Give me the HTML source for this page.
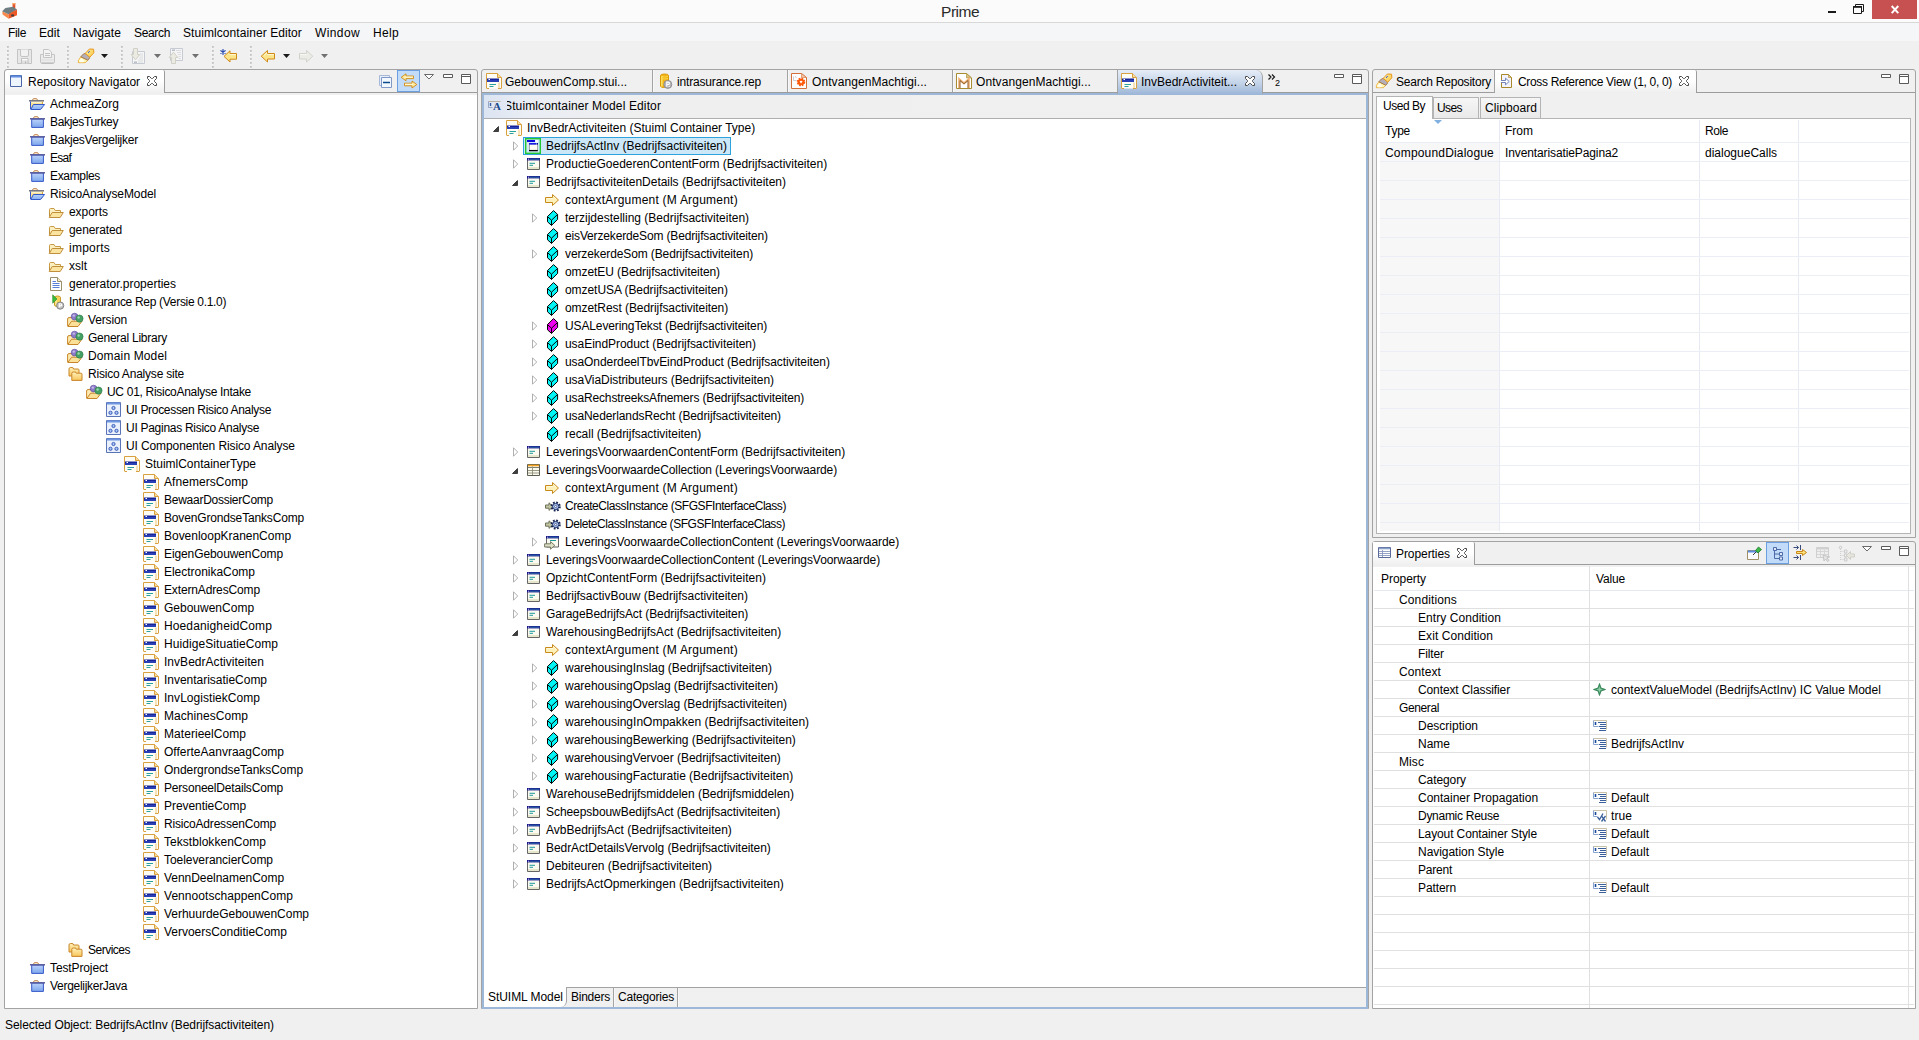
<!DOCTYPE html>
<html lang="en"><head><meta charset="utf-8"><title>Prime</title>
<style>
html,body{margin:0;padding:0}
body{width:1919px;height:1040px;position:relative;overflow:hidden;background:#f0f0f0;
 font-family:"Liberation Sans",sans-serif;font-size:12px;color:#000;line-height:16px}
.b{position:absolute;box-sizing:border-box}
.ic{position:absolute;overflow:visible}
.t{position:absolute;white-space:nowrap;height:16px;line-height:16px;font-size:12px;letter-spacing:-0.1px;color:#000}
.title{position:absolute;white-space:nowrap;font-size:15px;line-height:20px;color:#2b2b2b}
.panel{position:absolute;box-sizing:border-box;border:1px solid #a3a3a3;border-radius:3px 3px 0 0;background:#f0f0f0}
.white{background:#fff}
.tabsel{position:absolute;box-sizing:border-box;background:linear-gradient(#fff 0,#fff 45%,#efefef 100%);border-right:1px solid #9c9c9c;border-radius:0 2px 0 0}
.tabline{position:absolute;height:1px;background:#9c9c9c}
.vsep{position:absolute;width:1px;background:#a3a3a3;box-shadow:1px 0 0 #f8f8f8}
.hl{position:absolute;height:1px}
.vl{position:absolute;width:1px}

</style></head>
<body>

<div class="b" style="left:0px;top:0px;width:1919px;height:22px;background:#fbfbfb"></div>
<div class="b" style="left:0px;top:22px;width:1919px;height:1px;background:#d8d8d8"></div>
<svg class="ic" style="left:0px;top:0px" width="20" height="22" viewBox="0 0 20 22"><rect x="12.6" y="3.4" width="2.7" height="5.4" fill="#e6502a"/><rect x="12.3" y="3" width="3.3" height="1.4" fill="#f8a868"/><path d="M2.2 11.2L9 14.5L8.6 18.8L2.6 14.6Z" fill="#f58a4c"/><path d="M9 14.5L17 9.6V15.2L8.6 18.8Z" fill="#ee5a26"/><path d="M2.2 11.2L5.4 8L13 6.8L17 9.6L9 14.5Z" fill="#6e7d82"/><path d="M9 14.5L10 12.6L11 13.4L12 11.4L13 12.2L14 10.2L15 11L17 9.6V11L9 15.6Z" fill="#ee5a26"/><ellipse cx="12.6" cy="15.4" rx="1.5" ry="1.2" fill="#4a3c3c"/></svg>
<span class="title" style="left:941px;top:2px;font-size:15.5px;letter-spacing:-0.45px">Prime</span>
<div class="b" style="left:1828px;top:11px;width:8px;height:2px;background:#1a1a1a"></div>
<svg class="ic" style="left:1853px;top:4px" width="11" height="10" viewBox="0 0 11 10"><path d="M2.5 2V0.5H10.5V7.5H8.5" fill="none" stroke="#1a1a1a"/><path d="M0.5 2.5H8.5V9.5H0.5Z" fill="none" stroke="#1a1a1a"/><path d="M0 3H9" stroke="#1a1a1a" stroke-width="1.6"/></svg>
<div class="b" style="left:1872px;top:0px;width:45px;height:19px;background:#c75050"></div>
<svg class="ic" style="left:1891px;top:5px" width="8" height="9" viewBox="0 0 8 9"><path d="M0.7 1L7.3 8.2M7.3 1L0.7 8.2" stroke="#fff" stroke-width="1.9"/></svg>
<div class="b" style="left:0px;top:23px;width:1919px;height:18px;background:#f5f6f7"></div>
<span class="t" style="left:8px;top:25px;letter-spacing:-0.34px;">File</span>
<span class="t" style="left:39px;top:25px;letter-spacing:0.08px;">Edit</span>
<span class="t" style="left:73px;top:25px;letter-spacing:0.08px;">Navigate</span>
<span class="t" style="left:134px;top:25px;letter-spacing:-0.34px;">Search</span>
<span class="t" style="left:183px;top:25px;letter-spacing:0.07px;">Stuimlcontainer Editor</span>
<span class="t" style="left:315px;top:25px;letter-spacing:0.39px;">Window</span>
<span class="t" style="left:373px;top:25px;letter-spacing:0.33px;">Help</span>
<div class="b" style="left:0px;top:41px;width:1919px;height:28px;background:#f0f0f0"></div>
<svg class="ic" style="left:6px;top:45px" width="4" height="24" viewBox="0 0 4 24"><rect x="1" y="1" width="1.8" height="1.8" fill="#c2c2c2"/><rect x="0.5" y="3" width="1" height="1" fill="#fafafa"/><rect x="1" y="5" width="1.8" height="1.8" fill="#c2c2c2"/><rect x="0.5" y="7" width="1" height="1" fill="#fafafa"/><rect x="1" y="9" width="1.8" height="1.8" fill="#c2c2c2"/><rect x="0.5" y="11" width="1" height="1" fill="#fafafa"/><rect x="1" y="13" width="1.8" height="1.8" fill="#c2c2c2"/><rect x="0.5" y="15" width="1" height="1" fill="#fafafa"/><rect x="1" y="17" width="1.8" height="1.8" fill="#c2c2c2"/><rect x="0.5" y="19" width="1" height="1" fill="#fafafa"/><rect x="1" y="21" width="1.8" height="1.8" fill="#c2c2c2"/><rect x="0.5" y="23" width="1" height="1" fill="#fafafa"/></svg>
<svg class="ic" style="left:66px;top:45px" width="4" height="24" viewBox="0 0 4 24"><rect x="1" y="1" width="1.8" height="1.8" fill="#c2c2c2"/><rect x="0.5" y="3" width="1" height="1" fill="#fafafa"/><rect x="1" y="5" width="1.8" height="1.8" fill="#c2c2c2"/><rect x="0.5" y="7" width="1" height="1" fill="#fafafa"/><rect x="1" y="9" width="1.8" height="1.8" fill="#c2c2c2"/><rect x="0.5" y="11" width="1" height="1" fill="#fafafa"/><rect x="1" y="13" width="1.8" height="1.8" fill="#c2c2c2"/><rect x="0.5" y="15" width="1" height="1" fill="#fafafa"/><rect x="1" y="17" width="1.8" height="1.8" fill="#c2c2c2"/><rect x="0.5" y="19" width="1" height="1" fill="#fafafa"/><rect x="1" y="21" width="1.8" height="1.8" fill="#c2c2c2"/><rect x="0.5" y="23" width="1" height="1" fill="#fafafa"/></svg>
<svg class="ic" style="left:120px;top:45px" width="4" height="24" viewBox="0 0 4 24"><rect x="1" y="1" width="1.8" height="1.8" fill="#c2c2c2"/><rect x="0.5" y="3" width="1" height="1" fill="#fafafa"/><rect x="1" y="5" width="1.8" height="1.8" fill="#c2c2c2"/><rect x="0.5" y="7" width="1" height="1" fill="#fafafa"/><rect x="1" y="9" width="1.8" height="1.8" fill="#c2c2c2"/><rect x="0.5" y="11" width="1" height="1" fill="#fafafa"/><rect x="1" y="13" width="1.8" height="1.8" fill="#c2c2c2"/><rect x="0.5" y="15" width="1" height="1" fill="#fafafa"/><rect x="1" y="17" width="1.8" height="1.8" fill="#c2c2c2"/><rect x="0.5" y="19" width="1" height="1" fill="#fafafa"/><rect x="1" y="21" width="1.8" height="1.8" fill="#c2c2c2"/><rect x="0.5" y="23" width="1" height="1" fill="#fafafa"/></svg>
<svg class="ic" style="left:211px;top:45px" width="4" height="24" viewBox="0 0 4 24"><rect x="1" y="1" width="1.8" height="1.8" fill="#c2c2c2"/><rect x="0.5" y="3" width="1" height="1" fill="#fafafa"/><rect x="1" y="5" width="1.8" height="1.8" fill="#c2c2c2"/><rect x="0.5" y="7" width="1" height="1" fill="#fafafa"/><rect x="1" y="9" width="1.8" height="1.8" fill="#c2c2c2"/><rect x="0.5" y="11" width="1" height="1" fill="#fafafa"/><rect x="1" y="13" width="1.8" height="1.8" fill="#c2c2c2"/><rect x="0.5" y="15" width="1" height="1" fill="#fafafa"/><rect x="1" y="17" width="1.8" height="1.8" fill="#c2c2c2"/><rect x="0.5" y="19" width="1" height="1" fill="#fafafa"/><rect x="1" y="21" width="1.8" height="1.8" fill="#c2c2c2"/><rect x="0.5" y="23" width="1" height="1" fill="#fafafa"/></svg>
<svg class="ic" style="left:249px;top:45px" width="4" height="24" viewBox="0 0 4 24"><rect x="1" y="1" width="1.8" height="1.8" fill="#c2c2c2"/><rect x="0.5" y="3" width="1" height="1" fill="#fafafa"/><rect x="1" y="5" width="1.8" height="1.8" fill="#c2c2c2"/><rect x="0.5" y="7" width="1" height="1" fill="#fafafa"/><rect x="1" y="9" width="1.8" height="1.8" fill="#c2c2c2"/><rect x="0.5" y="11" width="1" height="1" fill="#fafafa"/><rect x="1" y="13" width="1.8" height="1.8" fill="#c2c2c2"/><rect x="0.5" y="15" width="1" height="1" fill="#fafafa"/><rect x="1" y="17" width="1.8" height="1.8" fill="#c2c2c2"/><rect x="0.5" y="19" width="1" height="1" fill="#fafafa"/><rect x="1" y="21" width="1.8" height="1.8" fill="#c2c2c2"/><rect x="0.5" y="23" width="1" height="1" fill="#fafafa"/></svg>
<svg class="ic" style="left:17px;top:49px" width="15" height="15" viewBox="0 0 15 15"><path d="M0.5 0.5H14.5V14.5H0.5Z" fill="#e8e8e8" stroke="#c4c4c4"/><path d="M3.5 0.5V6Q3.5 7.5 5 7.5H10Q11.5 7.5 11.5 6V0.5" fill="#f2f2f2" stroke="#c4c4c4"/><path d="M4.5 14.5V9.5H11V14.5" fill="#e0e0e0" stroke="#c0c0c0"/><path d="M5 10.6H10.5" stroke="#fbfbfb" stroke-width="1.4"/><path d="M8.5 12.5V14.5" stroke="#b8b8b8" stroke-width="1.2"/></svg>
<svg class="ic" style="left:40px;top:49px" width="15" height="15" viewBox="0 0 15 15"><path d="M0.5 13V5.5H14.5V13Q14.5 14 13.5 14H1.5Q0.5 14 0.5 13Z" fill="#ececec" stroke="#c4c4c4"/><path d="M3.5 8.5V0.5H8.5L11.5 3V8.5Z" fill="#f4f4f4" stroke="#c4c4c4"/><path d="M5 4.5H10M5 6.5H10" stroke="#c2c2c2" stroke-width="1"/><path d="M1 11H14" stroke="#dcdcdc"/><path d="M1.5 14.3H13.5" stroke="#bcbcbc" stroke-width="1.2"/></svg>
<svg class="ic" style="left:78px;top:48px" width="16" height="16" viewBox="0 0 16 16"><path d="M2.8 8.8L0.4 12.4V14.7H7.2L9.8 12.2Z" fill="#fff6b8" stroke="#e8a422" stroke-width=".8" stroke-linejoin="round"/><path d="M1.6 12.6L3.6 10.2L6.4 13.2L5.4 14.2H1.6Z" fill="#fffef0"/><path d="M2.8 8.8L5.4 6L7.2 5.4L11.8 9.2L10.8 11.4L9.8 12.2Z" fill="#b6aeb8" stroke="#9c6c34" stroke-width=".8" stroke-linejoin="round"/><path d="M7.2 5.4L11.4 1L15.6 1.2L15.8 4.8L11.8 9.2Z" fill="#fbd868" stroke="#e8961e" stroke-width="1" stroke-linejoin="round"/><path d="M9 5.6L12.2 2.2" stroke="#fdf0b0" stroke-width="1.4"/><circle cx="11.3" cy="3.3" r=".6" fill="#2448c0"/><circle cx="10.4" cy="4.3" r=".6" fill="#2448c0"/></svg>
<svg class="ic" style="left:101px;top:54px" width="7" height="4" viewBox="0 0 7 4"><path d="M0 0H7L3.5 4Z" fill="#1a1a1a"/></svg>
<svg class="ic" style="left:130px;top:48px" width="16" height="16" viewBox="0 0 16 16"><path d="M2.5 3.5H14.5V15.5H2.5Z" fill="#f5f5f5" stroke="#c6cad2"/><path d="M10 6H13M10 8H13M9 10H13M8 12H13M8 14H13" stroke="#dadce0"/><path d="M4 14.2H7" stroke="#b4b8c4" stroke-width="1.4"/><path d="M3.5 0.5H7.5V6.5H9.8L5.5 11.8L1.2 6.5H3.5Z" fill="#ebebe3" stroke="#d0d0c6" stroke-linejoin="round"/></svg>
<svg class="ic" style="left:154px;top:54px" width="7" height="4" viewBox="0 0 7 4"><path d="M0 0H7L3.5 4Z" fill="#707070"/></svg>
<svg class="ic" style="left:168px;top:48px" width="16" height="16" viewBox="0 0 16 16"><path d="M2.5 0.5H14.5V12.5H2.5Z" fill="#f5f5f5" stroke="#c6cad2"/><path d="M8 2.5H13M9 4.5H13M10 6.5H13M10.5 8.5H13M10.5 10.5H13" stroke="#dadce0"/><path d="M4 2.2H7" stroke="#b4b8c4" stroke-width="1.4"/><path d="M3.5 15.5H7.5V9.5H9.8L5.5 4.2L1.2 9.5H3.5Z" fill="#ebebe3" stroke="#d0d0c6" stroke-linejoin="round"/></svg>
<svg class="ic" style="left:192px;top:54px" width="7" height="4" viewBox="0 0 7 4"><path d="M0 0H7L3.5 4Z" fill="#707070"/></svg>
<svg class="ic" style="left:220px;top:48px" width="17" height="16" viewBox="0 0 17 16"><path d="M16.5 5.5H10V2.8L4 8.4L10 14V11.2H16.5Z" fill="#fde58c" stroke="#d08a18" stroke-linejoin="round"/><path d="M9.5 6.6H16" stroke="#fff8d8"/><path d="M3 1V7M0.4 2.5L5.6 5.5M5.6 2.5L0.4 5.5" stroke="#2448b0" stroke-width="1.1"/></svg>
<svg class="ic" style="left:260px;top:49px" width="16" height="16" viewBox="0 0 16 16"><path d="M14.5 4.5H7.5V1.5L1.2 7.2L7.5 13V10H14.5Z" fill="#fde58c" stroke="#d08a18" stroke-linejoin="round"/><path d="M7 5.6H14M4 6.5L7 3.8" stroke="#fff8d8" stroke-width="1" fill="none"/></svg>
<svg class="ic" style="left:283px;top:54px" width="7" height="4" viewBox="0 0 7 4"><path d="M0 0H7L3.5 4Z" fill="#1a1a1a"/></svg>
<svg class="ic" style="left:299px;top:49px" width="16" height="16" viewBox="0 0 16 16"><path d="M0.5 4.5H7.5V1.5L13.8 7.2L7.5 13V10H0.5Z" fill="#ecece6" stroke="#d2d2cc" stroke-linejoin="round"/><path d="M1 5.6H8" stroke="#f8f8f4" stroke-width="1" fill="none"/></svg>
<svg class="ic" style="left:321px;top:54px" width="7" height="4" viewBox="0 0 7 4"><path d="M0 0H7L3.5 4Z" fill="#707070"/></svg>
<div class="panel" style="left:4px;top:69px;width:474px;height:940px"></div>
<div class="b" style="left:5px;top:95px;width:472px;height:913px;background:#fff"></div>
<div class="tabsel" style="left:5px;top:70px;width:160px;height:23px;border-radius:4px 2px 0 0"></div>
<div class="tabline" style="left:164px;top:92px;width:313px"></div>
<svg class="ic" style="left:10px;top:75px" width="12" height="12" viewBox="0 0 12 12"><path d="M0.5 0.5H11.5V11.5H0.5Z" fill="#eef5fd" stroke="#4a66a8"/><path d="M1 1.5H11" stroke="#5f8de0" stroke-width="2"/></svg>
<span class="t" style="left:28px;top:74px;letter-spacing:-0.00px;">Repository Navigator</span>
<svg class="ic" style="left:147px;top:76px" width="10" height="10" viewBox="0 0 10 10"><path d="M0.5 0.5L2.5 0.5L4.5 2.5L5.5 2.5L7.5 0.5L9.5 0.5L9.5 2.5L7.5 4.5L7.5 5.5L9.5 7.5L9.5 9.5L7.5 9.5L5.5 7.5L4.5 7.5L2.5 9.5L0.5 9.5L0.5 7.5L2.5 5.5L2.5 4.5L0.5 2.5Z" fill="#fff" stroke="#4a4a4a" stroke-width="1"/></svg>
<svg class="ic" style="left:379px;top:75px" width="13" height="13" viewBox="0 0 13 13"><path d="M0.5 0.5H10.5V10.5H0.5Z" fill="#e8eef8" stroke="#a8b8d8"/><path d="M2.5 2.5H12.5V12.5H2.5Z" fill="#f2f8ff" stroke="#7f98c8"/><path d="M4 7.5H11" stroke="#0a4a8a" stroke-width="1.5"/></svg>
<div class="b" style="left:397px;top:70px;width:23px;height:22px;background:#c2dbf8;border:1px solid #6aa0e0"></div>
<svg class="ic" style="left:400px;top:73px" width="17" height="16" viewBox="0 0 17 16"><path d="M13.5 3H6V0.8L1.2 4.3L6 7.8V5.6H13.5Z" fill="#fdeaa0" stroke="#d08a10" stroke-linejoin="round" stroke-width=".9"/><path d="M4.5 10.2H12V8L16.8 11.5L12 15V12.8H4.5Z" fill="#fdeaa0" stroke="#d08a10" stroke-linejoin="round" stroke-width=".9"/><path d="M5 4.1H13M5 11.3H13" stroke="#fffbe8" stroke-width=".9"/></svg>
<svg class="ic" style="left:424px;top:74px" width="10" height="6" viewBox="0 0 10 6"><path d="M0.5 0.5H9.5L5 5Z" fill="#fff" stroke="#5a5a5a" stroke-width=".9"/></svg>
<svg class="ic" style="left:443px;top:74px" width="10" height="4" viewBox="0 0 10 4"><path d="M0.5 0.5H9.5V3.5H0.5Z" fill="#fff" stroke="#5a5a5a"/></svg>
<svg class="ic" style="left:461px;top:74px" width="10" height="10" viewBox="0 0 10 10"><path d="M0.5 0.5H9.5V9.5H0.5Z" fill="#fff" stroke="#5a5a5a"/><path d="M1 2.5H9" stroke="#5a5a5a"/></svg>
<svg class="ic" style="left:29px;top:96px" width="16" height="16" viewBox="0 0 16 16"><defs><linearGradient id="gpo" x1="0" y1="0" x2="0" y2="1"><stop offset="0" stop-color="#b4d0fa"/><stop offset="1" stop-color="#84aef0"/></linearGradient></defs><path d="M3.5 4.5Q3.5 2.5 5 2.5H7Q8.5 2.5 8.5 4.5" fill="#fbe4c0" stroke="#c8966a"/><path d="M1.5 5.5H13.5V12.5H1.5Z" fill="#fde492" stroke="none"/><path d="M2.5 6.5H12.5" stroke="#fef3c8"/><path d="M0 4.8H15" stroke="#666a78" stroke-width="1.4"/><path d="M1.5 5.5V13" stroke="#3558c8" fill="none"/><path d="M13.5 5.5V8" stroke="#d3a64c" fill="none"/><path d="M1.8 13.5L4.4 8.5H15.6L11.6 13.5Z" fill="url(#gpo)" stroke="#3558c8" stroke-linejoin="round"/></svg>
<span class="t" style="left:50px;top:96px;letter-spacing:0.03px;">AchmeaZorg</span>
<svg class="ic" style="left:29px;top:114px" width="16" height="16" viewBox="0 0 16 16"><defs><linearGradient id="gpc" x1="0" y1="0" x2="0" y2="1"><stop offset="0" stop-color="#bcd3fa"/><stop offset="1" stop-color="#7ca6ec"/></linearGradient></defs><path d="M4.5 4.5Q4.5 2.5 6 2.5H8Q9.5 2.5 9.5 4.5" fill="#fbe4c0" stroke="#c8966a"/><path d="M2.7 5H14.4V13.4H2.7Z" fill="url(#gpc)" stroke="#3558c8"/><path d="M1 4.8H16" stroke="#5a5c9c" stroke-width="1.5"/></svg>
<span class="t" style="left:50px;top:114px;letter-spacing:-0.35px;">BakjesTurkey</span>
<svg class="ic" style="left:29px;top:132px" width="16" height="16" viewBox="0 0 16 16"><defs><linearGradient id="gpc" x1="0" y1="0" x2="0" y2="1"><stop offset="0" stop-color="#bcd3fa"/><stop offset="1" stop-color="#7ca6ec"/></linearGradient></defs><path d="M4.5 4.5Q4.5 2.5 6 2.5H8Q9.5 2.5 9.5 4.5" fill="#fbe4c0" stroke="#c8966a"/><path d="M2.7 5H14.4V13.4H2.7Z" fill="url(#gpc)" stroke="#3558c8"/><path d="M1 4.8H16" stroke="#5a5c9c" stroke-width="1.5"/></svg>
<span class="t" style="left:50px;top:132px;letter-spacing:-0.24px;">BakjesVergelijker</span>
<svg class="ic" style="left:29px;top:150px" width="16" height="16" viewBox="0 0 16 16"><defs><linearGradient id="gpc" x1="0" y1="0" x2="0" y2="1"><stop offset="0" stop-color="#bcd3fa"/><stop offset="1" stop-color="#7ca6ec"/></linearGradient></defs><path d="M4.5 4.5Q4.5 2.5 6 2.5H8Q9.5 2.5 9.5 4.5" fill="#fbe4c0" stroke="#c8966a"/><path d="M2.7 5H14.4V13.4H2.7Z" fill="url(#gpc)" stroke="#3558c8"/><path d="M1 4.8H16" stroke="#5a5c9c" stroke-width="1.5"/></svg>
<span class="t" style="left:50px;top:150px;letter-spacing:-0.75px;">Esaf</span>
<svg class="ic" style="left:29px;top:168px" width="16" height="16" viewBox="0 0 16 16"><defs><linearGradient id="gpc" x1="0" y1="0" x2="0" y2="1"><stop offset="0" stop-color="#bcd3fa"/><stop offset="1" stop-color="#7ca6ec"/></linearGradient></defs><path d="M4.5 4.5Q4.5 2.5 6 2.5H8Q9.5 2.5 9.5 4.5" fill="#fbe4c0" stroke="#c8966a"/><path d="M2.7 5H14.4V13.4H2.7Z" fill="url(#gpc)" stroke="#3558c8"/><path d="M1 4.8H16" stroke="#5a5c9c" stroke-width="1.5"/></svg>
<span class="t" style="left:50px;top:168px;letter-spacing:-0.34px;">Examples</span>
<svg class="ic" style="left:29px;top:186px" width="16" height="16" viewBox="0 0 16 16"><defs><linearGradient id="gpo" x1="0" y1="0" x2="0" y2="1"><stop offset="0" stop-color="#b4d0fa"/><stop offset="1" stop-color="#84aef0"/></linearGradient></defs><path d="M3.5 4.5Q3.5 2.5 5 2.5H7Q8.5 2.5 8.5 4.5" fill="#fbe4c0" stroke="#c8966a"/><path d="M1.5 5.5H13.5V12.5H1.5Z" fill="#fde492" stroke="none"/><path d="M2.5 6.5H12.5" stroke="#fef3c8"/><path d="M0 4.8H15" stroke="#666a78" stroke-width="1.4"/><path d="M1.5 5.5V13" stroke="#3558c8" fill="none"/><path d="M13.5 5.5V8" stroke="#d3a64c" fill="none"/><path d="M1.8 13.5L4.4 8.5H15.6L11.6 13.5Z" fill="url(#gpo)" stroke="#3558c8" stroke-linejoin="round"/></svg>
<span class="t" style="left:50px;top:186px;letter-spacing:-0.11px;">RisicoAnalyseModel</span>
<svg class="ic" style="left:48px;top:204px" width="16" height="16" viewBox="0 0 16 16"><path d="M1.5 12.5V5.5Q1.5 4.5 2.5 4.5H6L7.2 6.5H12.5V8" fill="#fdf0c0" stroke="#c89a45"/><path d="M1.2 13.5L4.2 8.5H15.3L12.2 13.5Z" fill="#fbe3a0" stroke="#c08f3c"/><path d="M1.5 9V12.5" stroke="#c08f3c" fill="none"/></svg>
<span class="t" style="left:69px;top:204px;letter-spacing:-0.05px;">exports</span>
<svg class="ic" style="left:48px;top:222px" width="16" height="16" viewBox="0 0 16 16"><path d="M1.5 12.5V5.5Q1.5 4.5 2.5 4.5H6L7.2 6.5H12.5V8" fill="#fdf0c0" stroke="#c89a45"/><path d="M1.2 13.5L4.2 8.5H15.3L12.2 13.5Z" fill="#fbe3a0" stroke="#c08f3c"/><path d="M1.5 9V12.5" stroke="#c08f3c" fill="none"/></svg>
<span class="t" style="left:69px;top:222px;letter-spacing:-0.11px;">generated</span>
<svg class="ic" style="left:48px;top:240px" width="16" height="16" viewBox="0 0 16 16"><path d="M1.5 12.5V5.5Q1.5 4.5 2.5 4.5H6L7.2 6.5H12.5V8" fill="#fdf0c0" stroke="#c89a45"/><path d="M1.2 13.5L4.2 8.5H15.3L12.2 13.5Z" fill="#fbe3a0" stroke="#c08f3c"/><path d="M1.5 9V12.5" stroke="#c08f3c" fill="none"/></svg>
<span class="t" style="left:69px;top:240px;letter-spacing:0.24px;">imports</span>
<svg class="ic" style="left:48px;top:258px" width="16" height="16" viewBox="0 0 16 16"><path d="M1.5 12.5V5.5Q1.5 4.5 2.5 4.5H6L7.2 6.5H12.5V8" fill="#fdf0c0" stroke="#c89a45"/><path d="M1.2 13.5L4.2 8.5H15.3L12.2 13.5Z" fill="#fbe3a0" stroke="#c08f3c"/><path d="M1.5 9V12.5" stroke="#c08f3c" fill="none"/></svg>
<span class="t" style="left:69px;top:258px;letter-spacing:0.00px;">xslt</span>
<svg class="ic" style="left:48px;top:276px" width="16" height="16" viewBox="0 0 16 16"><path d="M2.5 1.5H9.5L13.5 5.5V14.5H2.5Z" fill="#fff" stroke="#9a8f6a"/><path d="M9.5 1.5V5.5H13.5" fill="#f3ecd0" stroke="#9a8f6a"/><path d="M4.5 5.5H8M4.5 7.5H11.5M4.5 9.5H11.5M4.5 11.5H11.5" stroke="#5a7fd6" fill="none"/></svg>
<span class="t" style="left:69px;top:276px;letter-spacing:-0.02px;">generator.properties</span>
<svg class="ic" style="left:48px;top:294px" width="16" height="16" viewBox="0 0 16 16"><path d="M6.5 3.5Q6.5 2 9.5 2Q12.5 2 12.5 3.5V11Q12.5 12.5 9.5 12.5Q6.5 12.5 6.5 11Z" fill="#f6d25a" stroke="#c79a2a"/><path d="M8 4V11" stroke="#fdf0b0" stroke-width="1.2"/><path d="M4.7 0.8V9.2L9 5Z" fill="#3dbb3d" stroke="#1f8a1f" stroke-width=".6"/><circle cx="12.2" cy="11.6" r="3.6" fill="#c0c0c0" stroke="#858585"/><path d="M11.3 13.6V9.8H12.6Q13.7 9.8 13.7 10.9Q13.7 11.9 12.6 11.9H11.3" stroke="#fff" stroke-width="1.1" fill="none"/></svg>
<span class="t" style="left:69px;top:294px;letter-spacing:-0.31px;">Intrasurance Rep (Versie 0.1.0)</span>
<svg class="ic" style="left:67px;top:312px" width="16" height="16" viewBox="0 0 16 16"><path d="M0.6 14V7Q0.6 5.6 2 5.6H5L6 7H10" fill="#fdeab0" stroke="#c8862a"/><path d="M0.8 14.5L4.6 9.2H15L11 14.5Z" fill="#fbe09a" stroke="#c8862a" stroke-linejoin="round"/><circle cx="7.6" cy="4.6" r="3.4" fill="#8c7cc8" stroke="#5a4a9a" stroke-width=".6"/><circle cx="6.8" cy="3.6" r="1.2" fill="#c4bae8"/><circle cx="12.5" cy="6.6" r="3.6" fill="#44a064" stroke="#2a7a44" stroke-width=".6"/><circle cx="11.6" cy="5.5" r="1.2" fill="#9cd8ae"/></svg>
<span class="t" style="left:88px;top:312px;letter-spacing:-0.15px;">Version</span>
<svg class="ic" style="left:67px;top:330px" width="16" height="16" viewBox="0 0 16 16"><path d="M0.6 14V7Q0.6 5.6 2 5.6H5L6 7H10" fill="#fdeab0" stroke="#c8862a"/><path d="M0.8 14.5L4.6 9.2H15L11 14.5Z" fill="#fbe09a" stroke="#c8862a" stroke-linejoin="round"/><circle cx="7.6" cy="4.6" r="3.4" fill="#8c7cc8" stroke="#5a4a9a" stroke-width=".6"/><circle cx="6.8" cy="3.6" r="1.2" fill="#c4bae8"/><circle cx="12.5" cy="6.6" r="3.6" fill="#44a064" stroke="#2a7a44" stroke-width=".6"/><circle cx="11.6" cy="5.5" r="1.2" fill="#9cd8ae"/></svg>
<span class="t" style="left:88px;top:330px;letter-spacing:-0.25px;">General Library</span>
<svg class="ic" style="left:67px;top:348px" width="16" height="16" viewBox="0 0 16 16"><path d="M0.6 14V7Q0.6 5.6 2 5.6H5L6 7H10" fill="#fdeab0" stroke="#c8862a"/><path d="M0.8 14.5L4.6 9.2H15L11 14.5Z" fill="#fbe09a" stroke="#c8862a" stroke-linejoin="round"/><circle cx="7.6" cy="4.6" r="3.4" fill="#8c7cc8" stroke="#5a4a9a" stroke-width=".6"/><circle cx="6.8" cy="3.6" r="1.2" fill="#c4bae8"/><circle cx="12.5" cy="6.6" r="3.6" fill="#44a064" stroke="#2a7a44" stroke-width=".6"/><circle cx="11.6" cy="5.5" r="1.2" fill="#9cd8ae"/></svg>
<span class="t" style="left:88px;top:348px;letter-spacing:0.14px;">Domain Model</span>
<svg class="ic" style="left:67px;top:366px" width="16" height="16" viewBox="0 0 16 16"><defs><linearGradient id="gfd" x1="0" y1="0" x2="0" y2="1"><stop offset="0" stop-color="#fff2bc"/><stop offset="1" stop-color="#f8c458"/></linearGradient></defs><path d="M2 10V3Q2 1.5 3.5 1.5H5Q6.5 1.5 6.5 3H11Q12 3 12 4V10Z" fill="url(#gfd)" stroke="#c8862a" stroke-linejoin="round"/><path d="M4.8 14.4V7.4Q4.8 6 6.3 6H7.8Q9.3 6 9.3 7.2H14Q15 7.2 15 8.2V14.4Z" fill="url(#gfd)" stroke="#c8862a" stroke-linejoin="round"/></svg>
<span class="t" style="left:88px;top:366px;letter-spacing:-0.21px;">Risico Analyse site</span>
<svg class="ic" style="left:86px;top:384px" width="16" height="16" viewBox="0 0 16 16"><path d="M0.6 14V7Q0.6 5.6 2 5.6H5L6 7H10" fill="#fdeab0" stroke="#c8862a"/><path d="M0.8 14.5L4.6 9.2H15L11 14.5Z" fill="#fbe09a" stroke="#c8862a" stroke-linejoin="round"/><circle cx="7.6" cy="4.6" r="3.4" fill="#8c7cc8" stroke="#5a4a9a" stroke-width=".6"/><circle cx="6.8" cy="3.6" r="1.2" fill="#c4bae8"/><circle cx="12.5" cy="6.6" r="3.6" fill="#44a064" stroke="#2a7a44" stroke-width=".6"/><circle cx="11.6" cy="5.5" r="1.2" fill="#9cd8ae"/></svg>
<span class="t" style="left:107px;top:384px;letter-spacing:-0.30px;">UC 01, RisicoAnalyse Intake</span>
<svg class="ic" style="left:105px;top:402px" width="16" height="16" viewBox="0 0 16 16"><path d="M1.5 0.5H15.5V14.5H1.5Z" fill="#eaf1fc" stroke="#5a74b8"/><path d="M2 1.5H15" stroke="#6f94e0" stroke-width="2"/><circle cx="8.5" cy="6" r="1.6" fill="#a8c6f6" stroke="#2f4fb0" stroke-width=".9"/><circle cx="5.5" cy="10.8" r="1.6" fill="#a8c6f6" stroke="#2f4fb0" stroke-width=".9"/><circle cx="11.5" cy="10.8" r="1.6" fill="#a8c6f6" stroke="#2f4fb0" stroke-width=".9"/></svg>
<span class="t" style="left:126px;top:402px;letter-spacing:-0.31px;">UI Processen Risico Analyse</span>
<svg class="ic" style="left:105px;top:420px" width="16" height="16" viewBox="0 0 16 16"><path d="M1.5 0.5H15.5V14.5H1.5Z" fill="#eaf1fc" stroke="#5a74b8"/><path d="M2 1.5H15" stroke="#6f94e0" stroke-width="2"/><circle cx="8.5" cy="6" r="1.6" fill="#a8c6f6" stroke="#2f4fb0" stroke-width=".9"/><circle cx="5.5" cy="10.8" r="1.6" fill="#a8c6f6" stroke="#2f4fb0" stroke-width=".9"/><circle cx="11.5" cy="10.8" r="1.6" fill="#a8c6f6" stroke="#2f4fb0" stroke-width=".9"/></svg>
<span class="t" style="left:126px;top:420px;letter-spacing:-0.28px;">UI Paginas Risico Analyse</span>
<svg class="ic" style="left:105px;top:438px" width="16" height="16" viewBox="0 0 16 16"><path d="M1.5 0.5H15.5V14.5H1.5Z" fill="#eaf1fc" stroke="#5a74b8"/><path d="M2 1.5H15" stroke="#6f94e0" stroke-width="2"/><circle cx="8.5" cy="6" r="1.6" fill="#a8c6f6" stroke="#2f4fb0" stroke-width=".9"/><circle cx="5.5" cy="10.8" r="1.6" fill="#a8c6f6" stroke="#2f4fb0" stroke-width=".9"/><circle cx="11.5" cy="10.8" r="1.6" fill="#a8c6f6" stroke="#2f4fb0" stroke-width=".9"/></svg>
<span class="t" style="left:126px;top:438px;letter-spacing:-0.11px;">UI Componenten Risico Analyse</span>
<svg class="ic" style="left:124px;top:456px" width="16" height="16" viewBox="0 0 16 16"><path d="M0.5 15.5V0.5H11.5L15.5 4.5V15.5" fill="#fffdf4" stroke="#d9a040"/><path d="M11.5 0.5V4.5H15.5" fill="#f5dca0" stroke="#d9a040"/><path d="M1 15.5H3M12 15.5H15" stroke="#d9a040"/><path d="M13 9.5V15" stroke="#ecc880"/><path d="M1 5.5H13V9H1Z" fill="#16249a"/><path d="M1 8H13" stroke="#3a5ad0"/><path d="M2.5 6.5H4" stroke="#fff"/><path d="M3.5 11.5H10M3.5 13.5H7.5" stroke="#2aa0a0"/></svg>
<span class="t" style="left:145px;top:456px;letter-spacing:-0.02px;">StuimlContainerType</span>
<svg class="ic" style="left:143px;top:474px" width="16" height="16" viewBox="0 0 16 16"><path d="M0.5 15.5V0.5H11.5L15.5 4.5V15.5" fill="#fffdf4" stroke="#d9a040"/><path d="M11.5 0.5V4.5H15.5" fill="#f5dca0" stroke="#d9a040"/><path d="M1 15.5H3M12 15.5H15" stroke="#d9a040"/><path d="M13 9.5V15" stroke="#ecc880"/><path d="M1 5.5H13V9H1Z" fill="#16249a"/><path d="M1 8H13" stroke="#3a5ad0"/><path d="M2.5 6.5H4" stroke="#fff"/><path d="M3.5 11.5H10M3.5 13.5H7.5" stroke="#2aa0a0"/></svg>
<span class="t" style="left:164px;top:474px;letter-spacing:0.05px;">AfnemersComp</span>
<svg class="ic" style="left:143px;top:492px" width="16" height="16" viewBox="0 0 16 16"><path d="M0.5 15.5V0.5H11.5L15.5 4.5V15.5" fill="#fffdf4" stroke="#d9a040"/><path d="M11.5 0.5V4.5H15.5" fill="#f5dca0" stroke="#d9a040"/><path d="M1 15.5H3M12 15.5H15" stroke="#d9a040"/><path d="M13 9.5V15" stroke="#ecc880"/><path d="M1 5.5H13V9H1Z" fill="#16249a"/><path d="M1 8H13" stroke="#3a5ad0"/><path d="M2.5 6.5H4" stroke="#fff"/><path d="M3.5 11.5H10M3.5 13.5H7.5" stroke="#2aa0a0"/></svg>
<span class="t" style="left:164px;top:492px;letter-spacing:-0.26px;">BewaarDossierComp</span>
<svg class="ic" style="left:143px;top:510px" width="16" height="16" viewBox="0 0 16 16"><path d="M0.5 15.5V0.5H11.5L15.5 4.5V15.5" fill="#fffdf4" stroke="#d9a040"/><path d="M11.5 0.5V4.5H15.5" fill="#f5dca0" stroke="#d9a040"/><path d="M1 15.5H3M12 15.5H15" stroke="#d9a040"/><path d="M13 9.5V15" stroke="#ecc880"/><path d="M1 5.5H13V9H1Z" fill="#16249a"/><path d="M1 8H13" stroke="#3a5ad0"/><path d="M2.5 6.5H4" stroke="#fff"/><path d="M3.5 11.5H10M3.5 13.5H7.5" stroke="#2aa0a0"/></svg>
<span class="t" style="left:164px;top:510px;letter-spacing:-0.16px;">BovenGrondseTanksComp</span>
<svg class="ic" style="left:143px;top:528px" width="16" height="16" viewBox="0 0 16 16"><path d="M0.5 15.5V0.5H11.5L15.5 4.5V15.5" fill="#fffdf4" stroke="#d9a040"/><path d="M11.5 0.5V4.5H15.5" fill="#f5dca0" stroke="#d9a040"/><path d="M1 15.5H3M12 15.5H15" stroke="#d9a040"/><path d="M13 9.5V15" stroke="#ecc880"/><path d="M1 5.5H13V9H1Z" fill="#16249a"/><path d="M1 8H13" stroke="#3a5ad0"/><path d="M2.5 6.5H4" stroke="#fff"/><path d="M3.5 11.5H10M3.5 13.5H7.5" stroke="#2aa0a0"/></svg>
<span class="t" style="left:164px;top:528px;letter-spacing:-0.02px;">BovenloopKranenComp</span>
<svg class="ic" style="left:143px;top:546px" width="16" height="16" viewBox="0 0 16 16"><path d="M0.5 15.5V0.5H11.5L15.5 4.5V15.5" fill="#fffdf4" stroke="#d9a040"/><path d="M11.5 0.5V4.5H15.5" fill="#f5dca0" stroke="#d9a040"/><path d="M1 15.5H3M12 15.5H15" stroke="#d9a040"/><path d="M13 9.5V15" stroke="#ecc880"/><path d="M1 5.5H13V9H1Z" fill="#16249a"/><path d="M1 8H13" stroke="#3a5ad0"/><path d="M2.5 6.5H4" stroke="#fff"/><path d="M3.5 11.5H10M3.5 13.5H7.5" stroke="#2aa0a0"/></svg>
<span class="t" style="left:164px;top:546px;letter-spacing:-0.10px;">EigenGebouwenComp</span>
<svg class="ic" style="left:143px;top:564px" width="16" height="16" viewBox="0 0 16 16"><path d="M0.5 15.5V0.5H11.5L15.5 4.5V15.5" fill="#fffdf4" stroke="#d9a040"/><path d="M11.5 0.5V4.5H15.5" fill="#f5dca0" stroke="#d9a040"/><path d="M1 15.5H3M12 15.5H15" stroke="#d9a040"/><path d="M13 9.5V15" stroke="#ecc880"/><path d="M1 5.5H13V9H1Z" fill="#16249a"/><path d="M1 8H13" stroke="#3a5ad0"/><path d="M2.5 6.5H4" stroke="#fff"/><path d="M3.5 11.5H10M3.5 13.5H7.5" stroke="#2aa0a0"/></svg>
<span class="t" style="left:164px;top:564px;letter-spacing:-0.03px;">ElectronikaComp</span>
<svg class="ic" style="left:143px;top:582px" width="16" height="16" viewBox="0 0 16 16"><path d="M0.5 15.5V0.5H11.5L15.5 4.5V15.5" fill="#fffdf4" stroke="#d9a040"/><path d="M11.5 0.5V4.5H15.5" fill="#f5dca0" stroke="#d9a040"/><path d="M1 15.5H3M12 15.5H15" stroke="#d9a040"/><path d="M13 9.5V15" stroke="#ecc880"/><path d="M1 5.5H13V9H1Z" fill="#16249a"/><path d="M1 8H13" stroke="#3a5ad0"/><path d="M2.5 6.5H4" stroke="#fff"/><path d="M3.5 11.5H10M3.5 13.5H7.5" stroke="#2aa0a0"/></svg>
<span class="t" style="left:164px;top:582px;letter-spacing:-0.14px;">ExternAdresComp</span>
<svg class="ic" style="left:143px;top:600px" width="16" height="16" viewBox="0 0 16 16"><path d="M0.5 15.5V0.5H11.5L15.5 4.5V15.5" fill="#fffdf4" stroke="#d9a040"/><path d="M11.5 0.5V4.5H15.5" fill="#f5dca0" stroke="#d9a040"/><path d="M1 15.5H3M12 15.5H15" stroke="#d9a040"/><path d="M13 9.5V15" stroke="#ecc880"/><path d="M1 5.5H13V9H1Z" fill="#16249a"/><path d="M1 8H13" stroke="#3a5ad0"/><path d="M2.5 6.5H4" stroke="#fff"/><path d="M3.5 11.5H10M3.5 13.5H7.5" stroke="#2aa0a0"/></svg>
<span class="t" style="left:164px;top:600px;letter-spacing:-0.00px;">GebouwenComp</span>
<svg class="ic" style="left:143px;top:618px" width="16" height="16" viewBox="0 0 16 16"><path d="M0.5 15.5V0.5H11.5L15.5 4.5V15.5" fill="#fffdf4" stroke="#d9a040"/><path d="M11.5 0.5V4.5H15.5" fill="#f5dca0" stroke="#d9a040"/><path d="M1 15.5H3M12 15.5H15" stroke="#d9a040"/><path d="M13 9.5V15" stroke="#ecc880"/><path d="M1 5.5H13V9H1Z" fill="#16249a"/><path d="M1 8H13" stroke="#3a5ad0"/><path d="M2.5 6.5H4" stroke="#fff"/><path d="M3.5 11.5H10M3.5 13.5H7.5" stroke="#2aa0a0"/></svg>
<span class="t" style="left:164px;top:618px;letter-spacing:0.12px;">HoedanigheidComp</span>
<svg class="ic" style="left:143px;top:636px" width="16" height="16" viewBox="0 0 16 16"><path d="M0.5 15.5V0.5H11.5L15.5 4.5V15.5" fill="#fffdf4" stroke="#d9a040"/><path d="M11.5 0.5V4.5H15.5" fill="#f5dca0" stroke="#d9a040"/><path d="M1 15.5H3M12 15.5H15" stroke="#d9a040"/><path d="M13 9.5V15" stroke="#ecc880"/><path d="M1 5.5H13V9H1Z" fill="#16249a"/><path d="M1 8H13" stroke="#3a5ad0"/><path d="M2.5 6.5H4" stroke="#fff"/><path d="M3.5 11.5H10M3.5 13.5H7.5" stroke="#2aa0a0"/></svg>
<span class="t" style="left:164px;top:636px;letter-spacing:0.07px;">HuidigeSituatieComp</span>
<svg class="ic" style="left:143px;top:654px" width="16" height="16" viewBox="0 0 16 16"><path d="M0.5 15.5V0.5H11.5L15.5 4.5V15.5" fill="#fffdf4" stroke="#d9a040"/><path d="M11.5 0.5V4.5H15.5" fill="#f5dca0" stroke="#d9a040"/><path d="M1 15.5H3M12 15.5H15" stroke="#d9a040"/><path d="M13 9.5V15" stroke="#ecc880"/><path d="M1 5.5H13V9H1Z" fill="#16249a"/><path d="M1 8H13" stroke="#3a5ad0"/><path d="M2.5 6.5H4" stroke="#fff"/><path d="M3.5 11.5H10M3.5 13.5H7.5" stroke="#2aa0a0"/></svg>
<span class="t" style="left:164px;top:654px;letter-spacing:0.03px;">InvBedrActiviteiten</span>
<svg class="ic" style="left:143px;top:672px" width="16" height="16" viewBox="0 0 16 16"><path d="M0.5 15.5V0.5H11.5L15.5 4.5V15.5" fill="#fffdf4" stroke="#d9a040"/><path d="M11.5 0.5V4.5H15.5" fill="#f5dca0" stroke="#d9a040"/><path d="M1 15.5H3M12 15.5H15" stroke="#d9a040"/><path d="M13 9.5V15" stroke="#ecc880"/><path d="M1 5.5H13V9H1Z" fill="#16249a"/><path d="M1 8H13" stroke="#3a5ad0"/><path d="M2.5 6.5H4" stroke="#fff"/><path d="M3.5 11.5H10M3.5 13.5H7.5" stroke="#2aa0a0"/></svg>
<span class="t" style="left:164px;top:672px;letter-spacing:-0.02px;">InventarisatieComp</span>
<svg class="ic" style="left:143px;top:690px" width="16" height="16" viewBox="0 0 16 16"><path d="M0.5 15.5V0.5H11.5L15.5 4.5V15.5" fill="#fffdf4" stroke="#d9a040"/><path d="M11.5 0.5V4.5H15.5" fill="#f5dca0" stroke="#d9a040"/><path d="M1 15.5H3M12 15.5H15" stroke="#d9a040"/><path d="M13 9.5V15" stroke="#ecc880"/><path d="M1 5.5H13V9H1Z" fill="#16249a"/><path d="M1 8H13" stroke="#3a5ad0"/><path d="M2.5 6.5H4" stroke="#fff"/><path d="M3.5 11.5H10M3.5 13.5H7.5" stroke="#2aa0a0"/></svg>
<span class="t" style="left:164px;top:690px;letter-spacing:0.04px;">InvLogistiekComp</span>
<svg class="ic" style="left:143px;top:708px" width="16" height="16" viewBox="0 0 16 16"><path d="M0.5 15.5V0.5H11.5L15.5 4.5V15.5" fill="#fffdf4" stroke="#d9a040"/><path d="M11.5 0.5V4.5H15.5" fill="#f5dca0" stroke="#d9a040"/><path d="M1 15.5H3M12 15.5H15" stroke="#d9a040"/><path d="M13 9.5V15" stroke="#ecc880"/><path d="M1 5.5H13V9H1Z" fill="#16249a"/><path d="M1 8H13" stroke="#3a5ad0"/><path d="M2.5 6.5H4" stroke="#fff"/><path d="M3.5 11.5H10M3.5 13.5H7.5" stroke="#2aa0a0"/></svg>
<span class="t" style="left:164px;top:708px;letter-spacing:0.05px;">MachinesComp</span>
<svg class="ic" style="left:143px;top:726px" width="16" height="16" viewBox="0 0 16 16"><path d="M0.5 15.5V0.5H11.5L15.5 4.5V15.5" fill="#fffdf4" stroke="#d9a040"/><path d="M11.5 0.5V4.5H15.5" fill="#f5dca0" stroke="#d9a040"/><path d="M1 15.5H3M12 15.5H15" stroke="#d9a040"/><path d="M13 9.5V15" stroke="#ecc880"/><path d="M1 5.5H13V9H1Z" fill="#16249a"/><path d="M1 8H13" stroke="#3a5ad0"/><path d="M2.5 6.5H4" stroke="#fff"/><path d="M3.5 11.5H10M3.5 13.5H7.5" stroke="#2aa0a0"/></svg>
<span class="t" style="left:164px;top:726px;letter-spacing:0.05px;">MaterieelComp</span>
<svg class="ic" style="left:143px;top:744px" width="16" height="16" viewBox="0 0 16 16"><path d="M0.5 15.5V0.5H11.5L15.5 4.5V15.5" fill="#fffdf4" stroke="#d9a040"/><path d="M11.5 0.5V4.5H15.5" fill="#f5dca0" stroke="#d9a040"/><path d="M1 15.5H3M12 15.5H15" stroke="#d9a040"/><path d="M13 9.5V15" stroke="#ecc880"/><path d="M1 5.5H13V9H1Z" fill="#16249a"/><path d="M1 8H13" stroke="#3a5ad0"/><path d="M2.5 6.5H4" stroke="#fff"/><path d="M3.5 11.5H10M3.5 13.5H7.5" stroke="#2aa0a0"/></svg>
<span class="t" style="left:164px;top:744px;letter-spacing:0.01px;">OfferteAanvraagComp</span>
<svg class="ic" style="left:143px;top:762px" width="16" height="16" viewBox="0 0 16 16"><path d="M0.5 15.5V0.5H11.5L15.5 4.5V15.5" fill="#fffdf4" stroke="#d9a040"/><path d="M11.5 0.5V4.5H15.5" fill="#f5dca0" stroke="#d9a040"/><path d="M1 15.5H3M12 15.5H15" stroke="#d9a040"/><path d="M13 9.5V15" stroke="#ecc880"/><path d="M1 5.5H13V9H1Z" fill="#16249a"/><path d="M1 8H13" stroke="#3a5ad0"/><path d="M2.5 6.5H4" stroke="#fff"/><path d="M3.5 11.5H10M3.5 13.5H7.5" stroke="#2aa0a0"/></svg>
<span class="t" style="left:164px;top:762px;letter-spacing:-0.05px;">OndergrondseTanksComp</span>
<svg class="ic" style="left:143px;top:780px" width="16" height="16" viewBox="0 0 16 16"><path d="M0.5 15.5V0.5H11.5L15.5 4.5V15.5" fill="#fffdf4" stroke="#d9a040"/><path d="M11.5 0.5V4.5H15.5" fill="#f5dca0" stroke="#d9a040"/><path d="M1 15.5H3M12 15.5H15" stroke="#d9a040"/><path d="M13 9.5V15" stroke="#ecc880"/><path d="M1 5.5H13V9H1Z" fill="#16249a"/><path d="M1 8H13" stroke="#3a5ad0"/><path d="M2.5 6.5H4" stroke="#fff"/><path d="M3.5 11.5H10M3.5 13.5H7.5" stroke="#2aa0a0"/></svg>
<span class="t" style="left:164px;top:780px;letter-spacing:-0.19px;">PersoneelDetailsComp</span>
<svg class="ic" style="left:143px;top:798px" width="16" height="16" viewBox="0 0 16 16"><path d="M0.5 15.5V0.5H11.5L15.5 4.5V15.5" fill="#fffdf4" stroke="#d9a040"/><path d="M11.5 0.5V4.5H15.5" fill="#f5dca0" stroke="#d9a040"/><path d="M1 15.5H3M12 15.5H15" stroke="#d9a040"/><path d="M13 9.5V15" stroke="#ecc880"/><path d="M1 5.5H13V9H1Z" fill="#16249a"/><path d="M1 8H13" stroke="#3a5ad0"/><path d="M2.5 6.5H4" stroke="#fff"/><path d="M3.5 11.5H10M3.5 13.5H7.5" stroke="#2aa0a0"/></svg>
<span class="t" style="left:164px;top:798px;letter-spacing:-0.05px;">PreventieComp</span>
<svg class="ic" style="left:143px;top:816px" width="16" height="16" viewBox="0 0 16 16"><path d="M0.5 15.5V0.5H11.5L15.5 4.5V15.5" fill="#fffdf4" stroke="#d9a040"/><path d="M11.5 0.5V4.5H15.5" fill="#f5dca0" stroke="#d9a040"/><path d="M1 15.5H3M12 15.5H15" stroke="#d9a040"/><path d="M13 9.5V15" stroke="#ecc880"/><path d="M1 5.5H13V9H1Z" fill="#16249a"/><path d="M1 8H13" stroke="#3a5ad0"/><path d="M2.5 6.5H4" stroke="#fff"/><path d="M3.5 11.5H10M3.5 13.5H7.5" stroke="#2aa0a0"/></svg>
<span class="t" style="left:164px;top:816px;letter-spacing:-0.19px;">RisicoAdressenComp</span>
<svg class="ic" style="left:143px;top:834px" width="16" height="16" viewBox="0 0 16 16"><path d="M0.5 15.5V0.5H11.5L15.5 4.5V15.5" fill="#fffdf4" stroke="#d9a040"/><path d="M11.5 0.5V4.5H15.5" fill="#f5dca0" stroke="#d9a040"/><path d="M1 15.5H3M12 15.5H15" stroke="#d9a040"/><path d="M13 9.5V15" stroke="#ecc880"/><path d="M1 5.5H13V9H1Z" fill="#16249a"/><path d="M1 8H13" stroke="#3a5ad0"/><path d="M2.5 6.5H4" stroke="#fff"/><path d="M3.5 11.5H10M3.5 13.5H7.5" stroke="#2aa0a0"/></svg>
<span class="t" style="left:164px;top:834px;letter-spacing:0.04px;">TekstblokkenComp</span>
<svg class="ic" style="left:143px;top:852px" width="16" height="16" viewBox="0 0 16 16"><path d="M0.5 15.5V0.5H11.5L15.5 4.5V15.5" fill="#fffdf4" stroke="#d9a040"/><path d="M11.5 0.5V4.5H15.5" fill="#f5dca0" stroke="#d9a040"/><path d="M1 15.5H3M12 15.5H15" stroke="#d9a040"/><path d="M13 9.5V15" stroke="#ecc880"/><path d="M1 5.5H13V9H1Z" fill="#16249a"/><path d="M1 8H13" stroke="#3a5ad0"/><path d="M2.5 6.5H4" stroke="#fff"/><path d="M3.5 11.5H10M3.5 13.5H7.5" stroke="#2aa0a0"/></svg>
<span class="t" style="left:164px;top:852px;letter-spacing:-0.06px;">ToeleverancierComp</span>
<svg class="ic" style="left:143px;top:870px" width="16" height="16" viewBox="0 0 16 16"><path d="M0.5 15.5V0.5H11.5L15.5 4.5V15.5" fill="#fffdf4" stroke="#d9a040"/><path d="M11.5 0.5V4.5H15.5" fill="#f5dca0" stroke="#d9a040"/><path d="M1 15.5H3M12 15.5H15" stroke="#d9a040"/><path d="M13 9.5V15" stroke="#ecc880"/><path d="M1 5.5H13V9H1Z" fill="#16249a"/><path d="M1 8H13" stroke="#3a5ad0"/><path d="M2.5 6.5H4" stroke="#fff"/><path d="M3.5 11.5H10M3.5 13.5H7.5" stroke="#2aa0a0"/></svg>
<span class="t" style="left:164px;top:870px;letter-spacing:-0.04px;">VennDeelnamenComp</span>
<svg class="ic" style="left:143px;top:888px" width="16" height="16" viewBox="0 0 16 16"><path d="M0.5 15.5V0.5H11.5L15.5 4.5V15.5" fill="#fffdf4" stroke="#d9a040"/><path d="M11.5 0.5V4.5H15.5" fill="#f5dca0" stroke="#d9a040"/><path d="M1 15.5H3M12 15.5H15" stroke="#d9a040"/><path d="M13 9.5V15" stroke="#ecc880"/><path d="M1 5.5H13V9H1Z" fill="#16249a"/><path d="M1 8H13" stroke="#3a5ad0"/><path d="M2.5 6.5H4" stroke="#fff"/><path d="M3.5 11.5H10M3.5 13.5H7.5" stroke="#2aa0a0"/></svg>
<span class="t" style="left:164px;top:888px;letter-spacing:0.05px;">VennootschappenComp</span>
<svg class="ic" style="left:143px;top:906px" width="16" height="16" viewBox="0 0 16 16"><path d="M0.5 15.5V0.5H11.5L15.5 4.5V15.5" fill="#fffdf4" stroke="#d9a040"/><path d="M11.5 0.5V4.5H15.5" fill="#f5dca0" stroke="#d9a040"/><path d="M1 15.5H3M12 15.5H15" stroke="#d9a040"/><path d="M13 9.5V15" stroke="#ecc880"/><path d="M1 5.5H13V9H1Z" fill="#16249a"/><path d="M1 8H13" stroke="#3a5ad0"/><path d="M2.5 6.5H4" stroke="#fff"/><path d="M3.5 11.5H10M3.5 13.5H7.5" stroke="#2aa0a0"/></svg>
<span class="t" style="left:164px;top:906px;letter-spacing:-0.02px;">VerhuurdeGebouwenComp</span>
<svg class="ic" style="left:143px;top:924px" width="16" height="16" viewBox="0 0 16 16"><path d="M0.5 15.5V0.5H11.5L15.5 4.5V15.5" fill="#fffdf4" stroke="#d9a040"/><path d="M11.5 0.5V4.5H15.5" fill="#f5dca0" stroke="#d9a040"/><path d="M1 15.5H3M12 15.5H15" stroke="#d9a040"/><path d="M13 9.5V15" stroke="#ecc880"/><path d="M1 5.5H13V9H1Z" fill="#16249a"/><path d="M1 8H13" stroke="#3a5ad0"/><path d="M2.5 6.5H4" stroke="#fff"/><path d="M3.5 11.5H10M3.5 13.5H7.5" stroke="#2aa0a0"/></svg>
<span class="t" style="left:164px;top:924px;letter-spacing:-0.02px;">VervoersConditieComp</span>
<svg class="ic" style="left:67px;top:942px" width="16" height="16" viewBox="0 0 16 16"><defs><linearGradient id="gfd" x1="0" y1="0" x2="0" y2="1"><stop offset="0" stop-color="#fff2bc"/><stop offset="1" stop-color="#f8c458"/></linearGradient></defs><path d="M2 10V3Q2 1.5 3.5 1.5H5Q6.5 1.5 6.5 3H11Q12 3 12 4V10Z" fill="url(#gfd)" stroke="#c8862a" stroke-linejoin="round"/><path d="M4.8 14.4V7.4Q4.8 6 6.3 6H7.8Q9.3 6 9.3 7.2H14Q15 7.2 15 8.2V14.4Z" fill="url(#gfd)" stroke="#c8862a" stroke-linejoin="round"/></svg>
<span class="t" style="left:88px;top:942px;letter-spacing:-0.50px;">Services</span>
<svg class="ic" style="left:29px;top:960px" width="16" height="16" viewBox="0 0 16 16"><defs><linearGradient id="gpc" x1="0" y1="0" x2="0" y2="1"><stop offset="0" stop-color="#bcd3fa"/><stop offset="1" stop-color="#7ca6ec"/></linearGradient></defs><path d="M4.5 4.5Q4.5 2.5 6 2.5H8Q9.5 2.5 9.5 4.5" fill="#fbe4c0" stroke="#c8966a"/><path d="M2.7 5H14.4V13.4H2.7Z" fill="url(#gpc)" stroke="#3558c8"/><path d="M1 4.8H16" stroke="#5a5c9c" stroke-width="1.5"/></svg>
<span class="t" style="left:50px;top:960px;letter-spacing:-0.12px;">TestProject</span>
<svg class="ic" style="left:29px;top:978px" width="16" height="16" viewBox="0 0 16 16"><defs><linearGradient id="gpc" x1="0" y1="0" x2="0" y2="1"><stop offset="0" stop-color="#bcd3fa"/><stop offset="1" stop-color="#7ca6ec"/></linearGradient></defs><path d="M4.5 4.5Q4.5 2.5 6 2.5H8Q9.5 2.5 9.5 4.5" fill="#fbe4c0" stroke="#c8966a"/><path d="M2.7 5H14.4V13.4H2.7Z" fill="url(#gpc)" stroke="#3558c8"/><path d="M1 4.8H16" stroke="#5a5c9c" stroke-width="1.5"/></svg>
<span class="t" style="left:50px;top:978px;letter-spacing:-0.29px;">VergelijkerJava</span>
<div class="panel" style="left:481px;top:69px;width:888px;height:940px"></div>
<div class="b" style="left:482px;top:93px;width:886px;height:916px;border:2px solid #9db7d8;background:#fff"></div>
<div class="tabline" style="left:482px;top:92px;width:886px"></div>
<svg class="ic" style="left:486px;top:73px" width="16" height="16" viewBox="0 0 16 16"><path d="M0.5 15.5V0.5H11.5L15.5 4.5V15.5" fill="#fffdf4" stroke="#d9a040"/><path d="M11.5 0.5V4.5H15.5" fill="#f5dca0" stroke="#d9a040"/><path d="M1 15.5H3M12 15.5H15" stroke="#d9a040"/><path d="M13 9.5V15" stroke="#ecc880"/><path d="M1 5.5H13V9H1Z" fill="#16249a"/><path d="M1 8H13" stroke="#3a5ad0"/><path d="M2.5 6.5H4" stroke="#fff"/><path d="M3.5 11.5H10M3.5 13.5H7.5" stroke="#2aa0a0"/></svg>
<span class="t" style="left:505px;top:74px;letter-spacing:-0.00px;">GebouwenComp.stui...</span>
<svg class="ic" style="left:658px;top:73px" width="16" height="16" viewBox="0 0 16 16"><path d="M2.5 2.5Q2.5 1 6.5 1Q10.5 1 10.5 2.5V13Q10.5 14.5 6.5 14.5Q2.5 14.5 2.5 13Z" fill="#f4b414" stroke="#d89a0a"/><path d="M3.8 3V13.6" stroke="#fde060" stroke-width="1.6"/><path d="M3 3.4Q6.5 4.8 10 3.4M3 5.4Q6.5 6.8 10 5.4" stroke="#fdd850" fill="none" stroke-width=".9"/><circle cx="9.8" cy="11.4" r="4" fill="#b4b4b8" stroke="#8a8a90" stroke-width=".9"/><path d="M8.8 13.8V9.2H10.2Q11.4 9.2 11.4 10.4Q11.4 11.5 10.2 11.5H8.8" stroke="#fff" stroke-width="1.2" fill="none"/><circle cx="11.2" cy="13.4" r=".6" fill="#fff"/></svg>
<span class="t" style="left:677px;top:74px;letter-spacing:-0.17px;">intrasurance.rep</span>
<svg class="ic" style="left:791px;top:73px" width="16" height="16" viewBox="0 0 16 16"><path d="M0.5 0.5H10.5L15.5 4.5V15.5H0.5Z" fill="#fff" stroke="#d2703a"/><path d="M10.5 0.5V4.5H15.5Z" fill="#f4c4a8" stroke="#d2703a" stroke-width=".6"/><path d="M2.5 3.5V7.5H5.5M4 3L5.5 5" stroke="#c0c0c8" fill="none" stroke-width=".8"/><circle cx="10" cy="9" r="3.3" fill="#ff5a0a" stroke="#ff5a0a" stroke-width="2" stroke-dasharray="1.6 1.0"/><circle cx="10" cy="9" r="2.8" fill="#ff5a0a"/><path d="M8.6 8.4Q10 7.2 11.6 8.4L10 10.4Z" fill="#fff"/></svg>
<span class="t" style="left:812px;top:74px;letter-spacing:0.08px;">OntvangenMachtigi...</span>
<svg class="ic" style="left:956px;top:73px" width="16" height="16" viewBox="0 0 16 16"><path d="M0.5 0.5H10.5L15.5 5V15.5H0.5Z" fill="#fff" stroke="#a88c34"/><path d="M10.5 0.5V5H15.5Z" fill="#dcc080" stroke="#a88c34" stroke-width=".6"/><path d="M3.3 15V6.3L8 10.3L12.7 6.3V15" fill="none" stroke="#f0b070" stroke-width="2.2"/><path d="M4 15V7.5L8 10.8L12 7.5V15" fill="none" stroke="#6a4a2a" stroke-width=".7"/></svg>
<span class="t" style="left:976px;top:74px;letter-spacing:0.08px;">OntvangenMachtigi...</span>
<div class="vsep" style="left:652px;top:70px;height:22px"></div>
<div class="vsep" style="left:787px;top:70px;height:22px"></div>
<div class="vsep" style="left:952px;top:70px;height:22px"></div>
<div class="b" style="left:1117px;top:70px;width:146px;height:24px;background:linear-gradient(#e6edf7,#c3d3e8 55%,#9db7d8);border:1px solid #a3a3a3;border-bottom:0;border-top:0;border-radius:0 7px 0 0"></div>
<svg class="ic" style="left:1121px;top:73px" width="16" height="16" viewBox="0 0 16 16"><path d="M0.5 15.5V0.5H11.5L15.5 4.5V15.5" fill="#fffdf4" stroke="#d9a040"/><path d="M11.5 0.5V4.5H15.5" fill="#f5dca0" stroke="#d9a040"/><path d="M1 15.5H3M12 15.5H15" stroke="#d9a040"/><path d="M13 9.5V15" stroke="#ecc880"/><path d="M1 5.5H13V9H1Z" fill="#16249a"/><path d="M1 8H13" stroke="#3a5ad0"/><path d="M2.5 6.5H4" stroke="#fff"/><path d="M3.5 11.5H10M3.5 13.5H7.5" stroke="#2aa0a0"/></svg>
<span class="t" style="left:1141px;top:74px;letter-spacing:0.00px;">InvBedrActiviteit...</span>
<svg class="ic" style="left:1245px;top:76px" width="10" height="10" viewBox="0 0 10 10"><path d="M0.5 0.5L2.5 0.5L4.5 2.5L5.5 2.5L7.5 0.5L9.5 0.5L9.5 2.5L7.5 4.5L7.5 5.5L9.5 7.5L9.5 9.5L7.5 9.5L5.5 7.5L4.5 7.5L2.5 9.5L0.5 9.5L0.5 7.5L2.5 5.5L2.5 4.5L0.5 2.5Z" fill="#fff" stroke="#4a4a4a" stroke-width="1"/></svg>
<svg class="ic" style="left:1268px;top:74px" width="14" height="14" viewBox="0 0 14 14"><path d="M0.5 0.5L3 3L0.5 5.5M4 0.5L6.5 3L4 5.5" fill="none" stroke="#1a1a1a" stroke-width="1.2"/></svg>
<span class="t" style="left:1275px;top:75px;font-size:9px;height:14px">2</span>
<svg class="ic" style="left:1334px;top:74px" width="10" height="4" viewBox="0 0 10 4"><path d="M0.5 0.5H9.5V3.5H0.5Z" fill="#fff" stroke="#5a5a5a"/></svg>
<svg class="ic" style="left:1352px;top:74px" width="10" height="10" viewBox="0 0 10 10"><path d="M0.5 0.5H9.5V9.5H0.5Z" fill="#fff" stroke="#5a5a5a"/><path d="M1 2.5H9" stroke="#5a5a5a"/></svg>
<div class="b" style="left:484px;top:95px;width:882px;height:23px;background:linear-gradient(to right,#dbe4f2 0,#e9edf4 40px,#efefef 160px,#f0f0f0)"></div>
<div class="b" style="left:484px;top:118px;width:882px;height:1px;background:#aeaeae"></div>
<svg class="ic" style="left:488px;top:101px" width="14" height="8" viewBox="0 0 14 8"><path d="M0.5 6.5V0.5H12.5" fill="none" stroke="#b8b0a0"/><path d="M0.5 0.5V6.5H4.5" fill="none" stroke="#9aa8c8"/><path d="M2.5 2V5" stroke="#2a5aa8" stroke-width="1.4"/></svg>
<span class="t" style="left:493px;top:98px;font-size:11px;font-weight:bold;color:#1a4a8a;font-family:'Liberation Serif',serif;letter-spacing:0">A</span>
<span class="t" style="left:507px;top:98px;width:160px;overflow:hidden"><span style="position:relative;left:-3px;letter-spacing:0.13px">Stuimlcontainer Model Editor</span></span>
<svg class="ic" style="left:493px;top:126px" width="6" height="6" viewBox="0 0 6 6"><path d="M5.5 0.5V5.5H0.5Z" fill="#404040" stroke="#262626" stroke-width=".8"/></svg>
<svg class="ic" style="left:506px;top:120px" width="16" height="16" viewBox="0 0 16 16"><path d="M0.5 15.5V0.5H11.5L15.5 4.5V15.5" fill="#fffdf4" stroke="#d9a040"/><path d="M11.5 0.5V4.5H15.5" fill="#f5dca0" stroke="#d9a040"/><path d="M1 15.5H3M12 15.5H15" stroke="#d9a040"/><path d="M13 9.5V15" stroke="#ecc880"/><path d="M1 5.5H13V9H1Z" fill="#16249a"/><path d="M1 8H13" stroke="#3a5ad0"/><path d="M2.5 6.5H4" stroke="#fff"/><path d="M3.5 11.5H10M3.5 13.5H7.5" stroke="#2aa0a0"/></svg>
<span class="t" style="left:527px;top:120px;letter-spacing:-0.01px;">InvBedrActiviteiten (Stuiml Container Type)</span>
<div class="b" style="left:523px;top:137px;width:208px;height:18px;background:#cce8f8;border:1px solid #2ea2dc"></div>
<svg class="ic" style="left:513px;top:141px" width="6" height="10" viewBox="0 0 6 10"><path d="M0.5 0.8L4.7 5L0.5 9.2Z" fill="#fff" stroke="#a6a6a6" stroke-width=".9"/></svg>
<svg class="ic" style="left:525px;top:138px" width="16" height="16" viewBox="0 0 16 16"><rect x="0.7" y="0.7" width="14.6" height="14.6" fill="none" stroke="#22c834" stroke-width="1.4"/><rect x="2" y="4" width="1.2" height="6.5" fill="#e6e6e6"/><rect x="2" y="2" width="8" height="2" fill="#0a0ae0"/><rect x="10.5" y="2" width="2.5" height="2.5" fill="#fff"/><rect x="4.5" y="6" width="8" height="6.5" fill="#fdfdf4" stroke="#9a9a9a" stroke-width=".8"/><rect x="4" y="5" width="7.5" height="1.6" fill="#1a1ae8"/><rect x="12" y="5" width="1" height="1.6" fill="#0a0a90"/><path d="M4 12.6H12.8" stroke="#000" stroke-width="1.3"/></svg>
<span class="t" style="left:546px;top:138px;letter-spacing:-0.01px;">BedrijfsActInv (Bedrijfsactiviteiten)</span>
<svg class="ic" style="left:513px;top:159px" width="6" height="10" viewBox="0 0 6 10"><path d="M0.5 0.8L4.7 5L0.5 9.2Z" fill="#fff" stroke="#a6a6a6" stroke-width=".9"/></svg>
<svg class="ic" style="left:525px;top:156px" width="16" height="16" viewBox="0 0 16 16"><path d="M2.5 2.5H14.5V13.5H2.5Z" fill="#fafaf0" stroke="#666"/><path d="M3 11.5H14M3 12.5H14" stroke="#e6e6cc"/><path d="M2 3.2H15" stroke="#15158c" stroke-width="2.4"/><path d="M5 3.2H14.5" stroke="#3a8ab0" stroke-width=".8"/><rect x="3.2" y="2.7" width="1" height="1" fill="#fff"/><path d="M4.5 7.3H10M4.5 9.3H8" stroke="#1f9a9a" stroke-width="1"/></svg>
<span class="t" style="left:546px;top:156px;letter-spacing:-0.02px;">ProductieGoederenContentForm (Bedrijfsactiviteiten)</span>
<svg class="ic" style="left:512px;top:180px" width="6" height="6" viewBox="0 0 6 6"><path d="M5.5 0.5V5.5H0.5Z" fill="#404040" stroke="#262626" stroke-width=".8"/></svg>
<svg class="ic" style="left:525px;top:174px" width="16" height="16" viewBox="0 0 16 16"><path d="M2.5 2.5H14.5V13.5H2.5Z" fill="#fafaf0" stroke="#666"/><path d="M3 11.5H14M3 12.5H14" stroke="#e6e6cc"/><path d="M2 3.2H15" stroke="#15158c" stroke-width="2.4"/><path d="M5 3.2H14.5" stroke="#3a8ab0" stroke-width=".8"/><rect x="3.2" y="2.7" width="1" height="1" fill="#fff"/><path d="M4.5 7.3H10M4.5 9.3H8" stroke="#1f9a9a" stroke-width="1"/></svg>
<span class="t" style="left:546px;top:174px;letter-spacing:-0.03px;">BedrijfsactiviteitenDetails (Bedrijfsactiviteiten)</span>
<svg class="ic" style="left:544px;top:192px" width="16" height="16" viewBox="0 0 16 16"><path d="M1.5 5.5H8.5V2.5L14.5 8L8.5 13.5V10.5H1.5Z" fill="#fdf0b8" stroke="#c98a1c" stroke-linejoin="round"/><path d="M2.5 6.5H9M9.5 4.5L12 7" stroke="#fff8dc" fill="none"/></svg>
<span class="t" style="left:565px;top:192px;letter-spacing:0.22px;">contextArgument (M Argument)</span>
<svg class="ic" style="left:532px;top:213px" width="6" height="10" viewBox="0 0 6 10"><path d="M0.5 0.8L4.7 5L0.5 9.2Z" fill="#fff" stroke="#a6a6a6" stroke-width=".9"/></svg>
<svg class="ic" style="left:544px;top:210px" width="16" height="16" viewBox="0 0 16 16"><path d="M9.5 0.6L13.6 4.4V9.4L7.5 15.4L3.5 11.8V6.6Z" fill="#00f6f6" stroke="#000" stroke-width="1" stroke-linejoin="round"/><path d="M3.5 6.6L7.5 10.2L13.6 4.4M7.5 10.2V15.4" fill="none" stroke="#000" stroke-width="1"/></svg>
<span class="t" style="left:565px;top:210px;letter-spacing:-0.00px;">terzijdestelling (Bedrijfsactiviteiten)</span>
<svg class="ic" style="left:544px;top:228px" width="16" height="16" viewBox="0 0 16 16"><path d="M9.5 0.6L13.6 4.4V9.4L7.5 15.4L3.5 11.8V6.6Z" fill="#00f6f6" stroke="#000" stroke-width="1" stroke-linejoin="round"/><path d="M3.5 6.6L7.5 10.2L13.6 4.4M7.5 10.2V15.4" fill="none" stroke="#000" stroke-width="1"/></svg>
<span class="t" style="left:565px;top:228px;letter-spacing:-0.15px;">eisVerzekerdeSom (Bedrijfsactiviteiten)</span>
<svg class="ic" style="left:532px;top:249px" width="6" height="10" viewBox="0 0 6 10"><path d="M0.5 0.8L4.7 5L0.5 9.2Z" fill="#fff" stroke="#a6a6a6" stroke-width=".9"/></svg>
<svg class="ic" style="left:544px;top:246px" width="16" height="16" viewBox="0 0 16 16"><path d="M9.5 0.6L13.6 4.4V9.4L7.5 15.4L3.5 11.8V6.6Z" fill="#00f6f6" stroke="#000" stroke-width="1" stroke-linejoin="round"/><path d="M3.5 6.6L7.5 10.2L13.6 4.4M7.5 10.2V15.4" fill="none" stroke="#000" stroke-width="1"/></svg>
<span class="t" style="left:565px;top:246px;letter-spacing:-0.11px;">verzekerdeSom (Bedrijfsactiviteiten)</span>
<svg class="ic" style="left:544px;top:264px" width="16" height="16" viewBox="0 0 16 16"><path d="M9.5 0.6L13.6 4.4V9.4L7.5 15.4L3.5 11.8V6.6Z" fill="#00f6f6" stroke="#000" stroke-width="1" stroke-linejoin="round"/><path d="M3.5 6.6L7.5 10.2L13.6 4.4M7.5 10.2V15.4" fill="none" stroke="#000" stroke-width="1"/></svg>
<span class="t" style="left:565px;top:264px;letter-spacing:-0.08px;">omzetEU (Bedrijfsactiviteiten)</span>
<svg class="ic" style="left:544px;top:282px" width="16" height="16" viewBox="0 0 16 16"><path d="M9.5 0.6L13.6 4.4V9.4L7.5 15.4L3.5 11.8V6.6Z" fill="#00f6f6" stroke="#000" stroke-width="1" stroke-linejoin="round"/><path d="M3.5 6.6L7.5 10.2L13.6 4.4M7.5 10.2V15.4" fill="none" stroke="#000" stroke-width="1"/></svg>
<span class="t" style="left:565px;top:282px;letter-spacing:-0.06px;">omzetUSA (Bedrijfsactiviteiten)</span>
<svg class="ic" style="left:544px;top:300px" width="16" height="16" viewBox="0 0 16 16"><path d="M9.5 0.6L13.6 4.4V9.4L7.5 15.4L3.5 11.8V6.6Z" fill="#00f6f6" stroke="#000" stroke-width="1" stroke-linejoin="round"/><path d="M3.5 6.6L7.5 10.2L13.6 4.4M7.5 10.2V15.4" fill="none" stroke="#000" stroke-width="1"/></svg>
<span class="t" style="left:565px;top:300px;letter-spacing:-0.07px;">omzetRest (Bedrijfsactiviteiten)</span>
<svg class="ic" style="left:532px;top:321px" width="6" height="10" viewBox="0 0 6 10"><path d="M0.5 0.8L4.7 5L0.5 9.2Z" fill="#fff" stroke="#a6a6a6" stroke-width=".9"/></svg>
<svg class="ic" style="left:544px;top:318px" width="16" height="16" viewBox="0 0 16 16"><path d="M9.5 0.6L13.6 4.4V9.4L7.5 15.4L3.5 11.8V6.6Z" fill="#f000f0" stroke="#000" stroke-width="1" stroke-linejoin="round"/><path d="M3.5 6.6L7.5 10.2L13.6 4.4M7.5 10.2V15.4" fill="none" stroke="#000" stroke-width="1"/></svg>
<span class="t" style="left:565px;top:318px;letter-spacing:-0.12px;">USALeveringTekst (Bedrijfsactiviteiten)</span>
<svg class="ic" style="left:532px;top:339px" width="6" height="10" viewBox="0 0 6 10"><path d="M0.5 0.8L4.7 5L0.5 9.2Z" fill="#fff" stroke="#a6a6a6" stroke-width=".9"/></svg>
<svg class="ic" style="left:544px;top:336px" width="16" height="16" viewBox="0 0 16 16"><path d="M9.5 0.6L13.6 4.4V9.4L7.5 15.4L3.5 11.8V6.6Z" fill="#00f6f6" stroke="#000" stroke-width="1" stroke-linejoin="round"/><path d="M3.5 6.6L7.5 10.2L13.6 4.4M7.5 10.2V15.4" fill="none" stroke="#000" stroke-width="1"/></svg>
<span class="t" style="left:565px;top:336px;letter-spacing:-0.05px;">usaEindProduct (Bedrijfsactiviteiten)</span>
<svg class="ic" style="left:532px;top:357px" width="6" height="10" viewBox="0 0 6 10"><path d="M0.5 0.8L4.7 5L0.5 9.2Z" fill="#fff" stroke="#a6a6a6" stroke-width=".9"/></svg>
<svg class="ic" style="left:544px;top:354px" width="16" height="16" viewBox="0 0 16 16"><path d="M9.5 0.6L13.6 4.4V9.4L7.5 15.4L3.5 11.8V6.6Z" fill="#00f6f6" stroke="#000" stroke-width="1" stroke-linejoin="round"/><path d="M3.5 6.6L7.5 10.2L13.6 4.4M7.5 10.2V15.4" fill="none" stroke="#000" stroke-width="1"/></svg>
<span class="t" style="left:565px;top:354px;letter-spacing:-0.08px;">usaOnderdeelTbvEindProduct (Bedrijfsactiviteiten)</span>
<svg class="ic" style="left:532px;top:375px" width="6" height="10" viewBox="0 0 6 10"><path d="M0.5 0.8L4.7 5L0.5 9.2Z" fill="#fff" stroke="#a6a6a6" stroke-width=".9"/></svg>
<svg class="ic" style="left:544px;top:372px" width="16" height="16" viewBox="0 0 16 16"><path d="M9.5 0.6L13.6 4.4V9.4L7.5 15.4L3.5 11.8V6.6Z" fill="#00f6f6" stroke="#000" stroke-width="1" stroke-linejoin="round"/><path d="M3.5 6.6L7.5 10.2L13.6 4.4M7.5 10.2V15.4" fill="none" stroke="#000" stroke-width="1"/></svg>
<span class="t" style="left:565px;top:372px;letter-spacing:-0.07px;">usaViaDistributeurs (Bedrijfsactiviteiten)</span>
<svg class="ic" style="left:532px;top:393px" width="6" height="10" viewBox="0 0 6 10"><path d="M0.5 0.8L4.7 5L0.5 9.2Z" fill="#fff" stroke="#a6a6a6" stroke-width=".9"/></svg>
<svg class="ic" style="left:544px;top:390px" width="16" height="16" viewBox="0 0 16 16"><path d="M9.5 0.6L13.6 4.4V9.4L7.5 15.4L3.5 11.8V6.6Z" fill="#00f6f6" stroke="#000" stroke-width="1" stroke-linejoin="round"/><path d="M3.5 6.6L7.5 10.2L13.6 4.4M7.5 10.2V15.4" fill="none" stroke="#000" stroke-width="1"/></svg>
<span class="t" style="left:565px;top:390px;letter-spacing:-0.14px;">usaRechstreeksAfnemers (Bedrijfsactiviteiten)</span>
<svg class="ic" style="left:532px;top:411px" width="6" height="10" viewBox="0 0 6 10"><path d="M0.5 0.8L4.7 5L0.5 9.2Z" fill="#fff" stroke="#a6a6a6" stroke-width=".9"/></svg>
<svg class="ic" style="left:544px;top:408px" width="16" height="16" viewBox="0 0 16 16"><path d="M9.5 0.6L13.6 4.4V9.4L7.5 15.4L3.5 11.8V6.6Z" fill="#00f6f6" stroke="#000" stroke-width="1" stroke-linejoin="round"/><path d="M3.5 6.6L7.5 10.2L13.6 4.4M7.5 10.2V15.4" fill="none" stroke="#000" stroke-width="1"/></svg>
<span class="t" style="left:565px;top:408px;letter-spacing:-0.10px;">usaNederlandsRecht (Bedrijfsactiviteiten)</span>
<svg class="ic" style="left:544px;top:426px" width="16" height="16" viewBox="0 0 16 16"><path d="M9.5 0.6L13.6 4.4V9.4L7.5 15.4L3.5 11.8V6.6Z" fill="#00f6f6" stroke="#000" stroke-width="1" stroke-linejoin="round"/><path d="M3.5 6.6L7.5 10.2L13.6 4.4M7.5 10.2V15.4" fill="none" stroke="#000" stroke-width="1"/></svg>
<span class="t" style="left:565px;top:426px;letter-spacing:-0.02px;">recall (Bedrijfsactiviteiten)</span>
<svg class="ic" style="left:513px;top:447px" width="6" height="10" viewBox="0 0 6 10"><path d="M0.5 0.8L4.7 5L0.5 9.2Z" fill="#fff" stroke="#a6a6a6" stroke-width=".9"/></svg>
<svg class="ic" style="left:525px;top:444px" width="16" height="16" viewBox="0 0 16 16"><path d="M2.5 2.5H14.5V13.5H2.5Z" fill="#fafaf0" stroke="#666"/><path d="M3 11.5H14M3 12.5H14" stroke="#e6e6cc"/><path d="M2 3.2H15" stroke="#15158c" stroke-width="2.4"/><path d="M5 3.2H14.5" stroke="#3a8ab0" stroke-width=".8"/><rect x="3.2" y="2.7" width="1" height="1" fill="#fff"/><path d="M4.5 7.3H10M4.5 9.3H8" stroke="#1f9a9a" stroke-width="1"/></svg>
<span class="t" style="left:546px;top:444px;letter-spacing:-0.03px;">LeveringsVoorwaardenContentForm (Bedrijfsactiviteiten)</span>
<svg class="ic" style="left:512px;top:468px" width="6" height="6" viewBox="0 0 6 6"><path d="M5.5 0.5V5.5H0.5Z" fill="#404040" stroke="#262626" stroke-width=".8"/></svg>
<svg class="ic" style="left:525px;top:462px" width="16" height="16" viewBox="0 0 16 16"><path d="M2.5 2.5H14.5V13.5H2.5Z" fill="#fbfaee" stroke="#5e5e50"/><path d="M3 3.5H14" stroke="#f2a21e" stroke-width="1.6"/><path d="M3 5.5H14" stroke="#5e5e50" stroke-width=".8"/><path d="M3 8.5H14M3 11H14M7.5 4.5V13" stroke="#8e8e78" stroke-width=".9" fill="none"/></svg>
<span class="t" style="left:546px;top:462px;letter-spacing:-0.10px;">LeveringsVoorwaardeCollection (LeveringsVoorwaarde)</span>
<svg class="ic" style="left:544px;top:480px" width="16" height="16" viewBox="0 0 16 16"><path d="M1.5 5.5H8.5V2.5L14.5 8L8.5 13.5V10.5H1.5Z" fill="#fdf0b8" stroke="#c98a1c" stroke-linejoin="round"/><path d="M2.5 6.5H9M9.5 4.5L12 7" stroke="#fff8dc" fill="none"/></svg>
<span class="t" style="left:565px;top:480px;letter-spacing:0.22px;">contextArgument (M Argument)</span>
<svg class="ic" style="left:544px;top:498px" width="16" height="16" viewBox="0 0 16 16"><path d="M1.5 7H5V4.8L9 8.6L5 12.4V10.2H1.5Z" fill="#c2c6a4" stroke="#6d7058" stroke-linejoin="round"/><circle cx="11.7" cy="8.5" r="4" fill="none" stroke="#16244e" stroke-width="2.2" stroke-dasharray="1.7 1.44"/><circle cx="11.7" cy="8.5" r="3.1" fill="#a9c0ec" stroke="#22356e" stroke-width="1"/><circle cx="11.7" cy="8.5" r="1.1" fill="#fff" stroke="#22356e" stroke-width=".6"/></svg>
<span class="t" style="left:565px;top:498px;letter-spacing:-0.45px;">CreateClassInstance (SFGSFInterfaceClass)</span>
<svg class="ic" style="left:544px;top:516px" width="16" height="16" viewBox="0 0 16 16"><path d="M1.5 7H5V4.8L9 8.6L5 12.4V10.2H1.5Z" fill="#c2c6a4" stroke="#6d7058" stroke-linejoin="round"/><circle cx="11.7" cy="8.5" r="4" fill="none" stroke="#16244e" stroke-width="2.2" stroke-dasharray="1.7 1.44"/><circle cx="11.7" cy="8.5" r="3.1" fill="#a9c0ec" stroke="#22356e" stroke-width="1"/><circle cx="11.7" cy="8.5" r="1.1" fill="#fff" stroke="#22356e" stroke-width=".6"/></svg>
<span class="t" style="left:565px;top:516px;letter-spacing:-0.44px;">DeleteClassInstance (SFGSFInterfaceClass)</span>
<svg class="ic" style="left:532px;top:537px" width="6" height="10" viewBox="0 0 6 10"><path d="M0.5 0.8L4.7 5L0.5 9.2Z" fill="#fff" stroke="#a6a6a6" stroke-width=".9"/></svg>
<svg class="ic" style="left:544px;top:534px" width="16" height="16" viewBox="0 0 16 16"><path d="M2.5 2.5H14.5V13H2.5Z" fill="#fafaf0" stroke="#666"/><path d="M2 3.2H15" stroke="#15158c" stroke-width="2.4"/><path d="M5 3.2H14.5" stroke="#3a8ab0" stroke-width=".8"/><rect x="3.2" y="2.7" width="1" height="1" fill="#fff"/><path d="M6 6.5H12" stroke="#1f9a9a"/><path d="M0.6 9.8H6.5V7.6L10.8 11.4L6.5 15.2V13H0.6Z" fill="#dcdec6" stroke="#6d7058" stroke-linejoin="round" stroke-width=".9"/></svg>
<span class="t" style="left:565px;top:534px;letter-spacing:-0.07px;">LeveringsVoorwaardeCollectionContent (LeveringsVoorwaarde)</span>
<svg class="ic" style="left:513px;top:555px" width="6" height="10" viewBox="0 0 6 10"><path d="M0.5 0.8L4.7 5L0.5 9.2Z" fill="#fff" stroke="#a6a6a6" stroke-width=".9"/></svg>
<svg class="ic" style="left:525px;top:552px" width="16" height="16" viewBox="0 0 16 16"><path d="M2.5 2.5H14.5V13.5H2.5Z" fill="#fafaf0" stroke="#666"/><path d="M3 11.5H14M3 12.5H14" stroke="#e6e6cc"/><path d="M2 3.2H15" stroke="#15158c" stroke-width="2.4"/><path d="M5 3.2H14.5" stroke="#3a8ab0" stroke-width=".8"/><rect x="3.2" y="2.7" width="1" height="1" fill="#fff"/><path d="M4.5 7.3H10M4.5 9.3H8" stroke="#1f9a9a" stroke-width="1"/></svg>
<span class="t" style="left:546px;top:552px;letter-spacing:-0.07px;">LeveringsVoorwaardeCollectionContent (LeveringsVoorwaarde)</span>
<svg class="ic" style="left:513px;top:573px" width="6" height="10" viewBox="0 0 6 10"><path d="M0.5 0.8L4.7 5L0.5 9.2Z" fill="#fff" stroke="#a6a6a6" stroke-width=".9"/></svg>
<svg class="ic" style="left:525px;top:570px" width="16" height="16" viewBox="0 0 16 16"><path d="M2.5 2.5H14.5V13.5H2.5Z" fill="#fafaf0" stroke="#666"/><path d="M3 11.5H14M3 12.5H14" stroke="#e6e6cc"/><path d="M2 3.2H15" stroke="#15158c" stroke-width="2.4"/><path d="M5 3.2H14.5" stroke="#3a8ab0" stroke-width=".8"/><rect x="3.2" y="2.7" width="1" height="1" fill="#fff"/><path d="M4.5 7.3H10M4.5 9.3H8" stroke="#1f9a9a" stroke-width="1"/></svg>
<span class="t" style="left:546px;top:570px;letter-spacing:0.03px;">OpzichtContentForm (Bedrijfsactiviteiten)</span>
<svg class="ic" style="left:513px;top:591px" width="6" height="10" viewBox="0 0 6 10"><path d="M0.5 0.8L4.7 5L0.5 9.2Z" fill="#fff" stroke="#a6a6a6" stroke-width=".9"/></svg>
<svg class="ic" style="left:525px;top:588px" width="16" height="16" viewBox="0 0 16 16"><path d="M2.5 2.5H14.5V13.5H2.5Z" fill="#fafaf0" stroke="#666"/><path d="M3 11.5H14M3 12.5H14" stroke="#e6e6cc"/><path d="M2 3.2H15" stroke="#15158c" stroke-width="2.4"/><path d="M5 3.2H14.5" stroke="#3a8ab0" stroke-width=".8"/><rect x="3.2" y="2.7" width="1" height="1" fill="#fff"/><path d="M4.5 7.3H10M4.5 9.3H8" stroke="#1f9a9a" stroke-width="1"/></svg>
<span class="t" style="left:546px;top:588px;letter-spacing:-0.02px;">BedrijfsactivBouw (Bedrijfsactiviteiten)</span>
<svg class="ic" style="left:513px;top:609px" width="6" height="10" viewBox="0 0 6 10"><path d="M0.5 0.8L4.7 5L0.5 9.2Z" fill="#fff" stroke="#a6a6a6" stroke-width=".9"/></svg>
<svg class="ic" style="left:525px;top:606px" width="16" height="16" viewBox="0 0 16 16"><path d="M2.5 2.5H14.5V13.5H2.5Z" fill="#fafaf0" stroke="#666"/><path d="M3 11.5H14M3 12.5H14" stroke="#e6e6cc"/><path d="M2 3.2H15" stroke="#15158c" stroke-width="2.4"/><path d="M5 3.2H14.5" stroke="#3a8ab0" stroke-width=".8"/><rect x="3.2" y="2.7" width="1" height="1" fill="#fff"/><path d="M4.5 7.3H10M4.5 9.3H8" stroke="#1f9a9a" stroke-width="1"/></svg>
<span class="t" style="left:546px;top:606px;letter-spacing:-0.08px;">GarageBedrijfsAct (Bedrijfsactiviteiten)</span>
<svg class="ic" style="left:512px;top:630px" width="6" height="6" viewBox="0 0 6 6"><path d="M5.5 0.5V5.5H0.5Z" fill="#404040" stroke="#262626" stroke-width=".8"/></svg>
<svg class="ic" style="left:525px;top:624px" width="16" height="16" viewBox="0 0 16 16"><path d="M2.5 2.5H14.5V13.5H2.5Z" fill="#fafaf0" stroke="#666"/><path d="M3 11.5H14M3 12.5H14" stroke="#e6e6cc"/><path d="M2 3.2H15" stroke="#15158c" stroke-width="2.4"/><path d="M5 3.2H14.5" stroke="#3a8ab0" stroke-width=".8"/><rect x="3.2" y="2.7" width="1" height="1" fill="#fff"/><path d="M4.5 7.3H10M4.5 9.3H8" stroke="#1f9a9a" stroke-width="1"/></svg>
<span class="t" style="left:546px;top:624px;letter-spacing:-0.01px;">WarehousingBedrijfsAct (Bedrijfsactiviteiten)</span>
<svg class="ic" style="left:544px;top:642px" width="16" height="16" viewBox="0 0 16 16"><path d="M1.5 5.5H8.5V2.5L14.5 8L8.5 13.5V10.5H1.5Z" fill="#fdf0b8" stroke="#c98a1c" stroke-linejoin="round"/><path d="M2.5 6.5H9M9.5 4.5L12 7" stroke="#fff8dc" fill="none"/></svg>
<span class="t" style="left:565px;top:642px;letter-spacing:0.22px;">contextArgument (M Argument)</span>
<svg class="ic" style="left:532px;top:663px" width="6" height="10" viewBox="0 0 6 10"><path d="M0.5 0.8L4.7 5L0.5 9.2Z" fill="#fff" stroke="#a6a6a6" stroke-width=".9"/></svg>
<svg class="ic" style="left:544px;top:660px" width="16" height="16" viewBox="0 0 16 16"><path d="M9.5 0.6L13.6 4.4V9.4L7.5 15.4L3.5 11.8V6.6Z" fill="#00f6f6" stroke="#000" stroke-width="1" stroke-linejoin="round"/><path d="M3.5 6.6L7.5 10.2L13.6 4.4M7.5 10.2V15.4" fill="none" stroke="#000" stroke-width="1"/></svg>
<span class="t" style="left:565px;top:660px;letter-spacing:-0.03px;">warehousingInslag (Bedrijfsactiviteiten)</span>
<svg class="ic" style="left:532px;top:681px" width="6" height="10" viewBox="0 0 6 10"><path d="M0.5 0.8L4.7 5L0.5 9.2Z" fill="#fff" stroke="#a6a6a6" stroke-width=".9"/></svg>
<svg class="ic" style="left:544px;top:678px" width="16" height="16" viewBox="0 0 16 16"><path d="M9.5 0.6L13.6 4.4V9.4L7.5 15.4L3.5 11.8V6.6Z" fill="#00f6f6" stroke="#000" stroke-width="1" stroke-linejoin="round"/><path d="M3.5 6.6L7.5 10.2L13.6 4.4M7.5 10.2V15.4" fill="none" stroke="#000" stroke-width="1"/></svg>
<span class="t" style="left:565px;top:678px;letter-spacing:-0.03px;">warehousingOpslag (Bedrijfsactiviteiten)</span>
<svg class="ic" style="left:532px;top:699px" width="6" height="10" viewBox="0 0 6 10"><path d="M0.5 0.8L4.7 5L0.5 9.2Z" fill="#fff" stroke="#a6a6a6" stroke-width=".9"/></svg>
<svg class="ic" style="left:544px;top:696px" width="16" height="16" viewBox="0 0 16 16"><path d="M9.5 0.6L13.6 4.4V9.4L7.5 15.4L3.5 11.8V6.6Z" fill="#00f6f6" stroke="#000" stroke-width="1" stroke-linejoin="round"/><path d="M3.5 6.6L7.5 10.2L13.6 4.4M7.5 10.2V15.4" fill="none" stroke="#000" stroke-width="1"/></svg>
<span class="t" style="left:565px;top:696px;letter-spacing:-0.05px;">warehousingOverslag (Bedrijfsactiviteiten)</span>
<svg class="ic" style="left:532px;top:717px" width="6" height="10" viewBox="0 0 6 10"><path d="M0.5 0.8L4.7 5L0.5 9.2Z" fill="#fff" stroke="#a6a6a6" stroke-width=".9"/></svg>
<svg class="ic" style="left:544px;top:714px" width="16" height="16" viewBox="0 0 16 16"><path d="M9.5 0.6L13.6 4.4V9.4L7.5 15.4L3.5 11.8V6.6Z" fill="#00f6f6" stroke="#000" stroke-width="1" stroke-linejoin="round"/><path d="M3.5 6.6L7.5 10.2L13.6 4.4M7.5 10.2V15.4" fill="none" stroke="#000" stroke-width="1"/></svg>
<span class="t" style="left:565px;top:714px;letter-spacing:-0.00px;">warehousingInOmpakken (Bedrijfsactiviteiten)</span>
<svg class="ic" style="left:532px;top:735px" width="6" height="10" viewBox="0 0 6 10"><path d="M0.5 0.8L4.7 5L0.5 9.2Z" fill="#fff" stroke="#a6a6a6" stroke-width=".9"/></svg>
<svg class="ic" style="left:544px;top:732px" width="16" height="16" viewBox="0 0 16 16"><path d="M9.5 0.6L13.6 4.4V9.4L7.5 15.4L3.5 11.8V6.6Z" fill="#00f6f6" stroke="#000" stroke-width="1" stroke-linejoin="round"/><path d="M3.5 6.6L7.5 10.2L13.6 4.4M7.5 10.2V15.4" fill="none" stroke="#000" stroke-width="1"/></svg>
<span class="t" style="left:565px;top:732px;letter-spacing:-0.03px;">warehousingBewerking (Bedrijfsactiviteiten)</span>
<svg class="ic" style="left:532px;top:753px" width="6" height="10" viewBox="0 0 6 10"><path d="M0.5 0.8L4.7 5L0.5 9.2Z" fill="#fff" stroke="#a6a6a6" stroke-width=".9"/></svg>
<svg class="ic" style="left:544px;top:750px" width="16" height="16" viewBox="0 0 16 16"><path d="M9.5 0.6L13.6 4.4V9.4L7.5 15.4L3.5 11.8V6.6Z" fill="#00f6f6" stroke="#000" stroke-width="1" stroke-linejoin="round"/><path d="M3.5 6.6L7.5 10.2L13.6 4.4M7.5 10.2V15.4" fill="none" stroke="#000" stroke-width="1"/></svg>
<span class="t" style="left:565px;top:750px;letter-spacing:-0.04px;">warehousingVervoer (Bedrijfsactiviteiten)</span>
<svg class="ic" style="left:532px;top:771px" width="6" height="10" viewBox="0 0 6 10"><path d="M0.5 0.8L4.7 5L0.5 9.2Z" fill="#fff" stroke="#a6a6a6" stroke-width=".9"/></svg>
<svg class="ic" style="left:544px;top:768px" width="16" height="16" viewBox="0 0 16 16"><path d="M9.5 0.6L13.6 4.4V9.4L7.5 15.4L3.5 11.8V6.6Z" fill="#00f6f6" stroke="#000" stroke-width="1" stroke-linejoin="round"/><path d="M3.5 6.6L7.5 10.2L13.6 4.4M7.5 10.2V15.4" fill="none" stroke="#000" stroke-width="1"/></svg>
<span class="t" style="left:565px;top:768px;letter-spacing:-0.03px;">warehousingFacturatie (Bedrijfsactiviteiten)</span>
<svg class="ic" style="left:513px;top:789px" width="6" height="10" viewBox="0 0 6 10"><path d="M0.5 0.8L4.7 5L0.5 9.2Z" fill="#fff" stroke="#a6a6a6" stroke-width=".9"/></svg>
<svg class="ic" style="left:525px;top:786px" width="16" height="16" viewBox="0 0 16 16"><path d="M2.5 2.5H14.5V13.5H2.5Z" fill="#fafaf0" stroke="#666"/><path d="M3 11.5H14M3 12.5H14" stroke="#e6e6cc"/><path d="M2 3.2H15" stroke="#15158c" stroke-width="2.4"/><path d="M5 3.2H14.5" stroke="#3a8ab0" stroke-width=".8"/><rect x="3.2" y="2.7" width="1" height="1" fill="#fff"/><path d="M4.5 7.3H10M4.5 9.3H8" stroke="#1f9a9a" stroke-width="1"/></svg>
<span class="t" style="left:546px;top:786px;letter-spacing:-0.04px;">WarehouseBedrijfsmiddelen (Bedrijfsmiddelen)</span>
<svg class="ic" style="left:513px;top:807px" width="6" height="10" viewBox="0 0 6 10"><path d="M0.5 0.8L4.7 5L0.5 9.2Z" fill="#fff" stroke="#a6a6a6" stroke-width=".9"/></svg>
<svg class="ic" style="left:525px;top:804px" width="16" height="16" viewBox="0 0 16 16"><path d="M2.5 2.5H14.5V13.5H2.5Z" fill="#fafaf0" stroke="#666"/><path d="M3 11.5H14M3 12.5H14" stroke="#e6e6cc"/><path d="M2 3.2H15" stroke="#15158c" stroke-width="2.4"/><path d="M5 3.2H14.5" stroke="#3a8ab0" stroke-width=".8"/><rect x="3.2" y="2.7" width="1" height="1" fill="#fff"/><path d="M4.5 7.3H10M4.5 9.3H8" stroke="#1f9a9a" stroke-width="1"/></svg>
<span class="t" style="left:546px;top:804px;letter-spacing:-0.06px;">ScheepsbouwBedijfsAct (Bedrijfsactiviteiten)</span>
<svg class="ic" style="left:513px;top:825px" width="6" height="10" viewBox="0 0 6 10"><path d="M0.5 0.8L4.7 5L0.5 9.2Z" fill="#fff" stroke="#a6a6a6" stroke-width=".9"/></svg>
<svg class="ic" style="left:525px;top:822px" width="16" height="16" viewBox="0 0 16 16"><path d="M2.5 2.5H14.5V13.5H2.5Z" fill="#fafaf0" stroke="#666"/><path d="M3 11.5H14M3 12.5H14" stroke="#e6e6cc"/><path d="M2 3.2H15" stroke="#15158c" stroke-width="2.4"/><path d="M5 3.2H14.5" stroke="#3a8ab0" stroke-width=".8"/><rect x="3.2" y="2.7" width="1" height="1" fill="#fff"/><path d="M4.5 7.3H10M4.5 9.3H8" stroke="#1f9a9a" stroke-width="1"/></svg>
<span class="t" style="left:546px;top:822px;letter-spacing:0.00px;">AvbBedrijfsAct (Bedrijfsactiviteiten)</span>
<svg class="ic" style="left:513px;top:843px" width="6" height="10" viewBox="0 0 6 10"><path d="M0.5 0.8L4.7 5L0.5 9.2Z" fill="#fff" stroke="#a6a6a6" stroke-width=".9"/></svg>
<svg class="ic" style="left:525px;top:840px" width="16" height="16" viewBox="0 0 16 16"><path d="M2.5 2.5H14.5V13.5H2.5Z" fill="#fafaf0" stroke="#666"/><path d="M3 11.5H14M3 12.5H14" stroke="#e6e6cc"/><path d="M2 3.2H15" stroke="#15158c" stroke-width="2.4"/><path d="M5 3.2H14.5" stroke="#3a8ab0" stroke-width=".8"/><rect x="3.2" y="2.7" width="1" height="1" fill="#fff"/><path d="M4.5 7.3H10M4.5 9.3H8" stroke="#1f9a9a" stroke-width="1"/></svg>
<span class="t" style="left:546px;top:840px;letter-spacing:-0.06px;">BedrActDetailsVervolg (Bedrijfsactiviteiten)</span>
<svg class="ic" style="left:513px;top:861px" width="6" height="10" viewBox="0 0 6 10"><path d="M0.5 0.8L4.7 5L0.5 9.2Z" fill="#fff" stroke="#a6a6a6" stroke-width=".9"/></svg>
<svg class="ic" style="left:525px;top:858px" width="16" height="16" viewBox="0 0 16 16"><path d="M2.5 2.5H14.5V13.5H2.5Z" fill="#fafaf0" stroke="#666"/><path d="M3 11.5H14M3 12.5H14" stroke="#e6e6cc"/><path d="M2 3.2H15" stroke="#15158c" stroke-width="2.4"/><path d="M5 3.2H14.5" stroke="#3a8ab0" stroke-width=".8"/><rect x="3.2" y="2.7" width="1" height="1" fill="#fff"/><path d="M4.5 7.3H10M4.5 9.3H8" stroke="#1f9a9a" stroke-width="1"/></svg>
<span class="t" style="left:546px;top:858px;letter-spacing:-0.02px;">Debiteuren (Bedrijfsactiviteiten)</span>
<svg class="ic" style="left:513px;top:879px" width="6" height="10" viewBox="0 0 6 10"><path d="M0.5 0.8L4.7 5L0.5 9.2Z" fill="#fff" stroke="#a6a6a6" stroke-width=".9"/></svg>
<svg class="ic" style="left:525px;top:876px" width="16" height="16" viewBox="0 0 16 16"><path d="M2.5 2.5H14.5V13.5H2.5Z" fill="#fafaf0" stroke="#666"/><path d="M3 11.5H14M3 12.5H14" stroke="#e6e6cc"/><path d="M2 3.2H15" stroke="#15158c" stroke-width="2.4"/><path d="M5 3.2H14.5" stroke="#3a8ab0" stroke-width=".8"/><rect x="3.2" y="2.7" width="1" height="1" fill="#fff"/><path d="M4.5 7.3H10M4.5 9.3H8" stroke="#1f9a9a" stroke-width="1"/></svg>
<span class="t" style="left:546px;top:876px;letter-spacing:0.01px;">BedrijfsActOpmerkingen (Bedrijfsactiviteiten)</span>
<div class="b" style="left:484px;top:987px;width:882px;height:20px;background:#f0f0f0;border-top:1px solid #a3a3a3"></div>
<div class="b" style="left:484px;top:987px;width:83px;height:20px;background:#fff;border-right:1px solid #a3a3a3;border-radius:0 0 6px 0"></div>
<div class="vsep" style="left:613px;top:988px;height:19px"></div>
<div class="vsep" style="left:677px;top:988px;height:19px"></div>
<span class="t" style="left:488px;top:989px;letter-spacing:-0.05px;">StUIML Model</span>
<span class="t" style="left:571px;top:989px;letter-spacing:-0.24px;">Binders</span>
<span class="t" style="left:618px;top:989px;letter-spacing:-0.20px;">Categories</span>
<div class="panel" style="left:1372px;top:69px;width:544px;height:469px"></div>
<div class="tabline" style="left:1373px;top:92px;width:122px"></div>
<div class="vsep" style="left:1494px;top:70px;height:23px"></div>
<div class="tabsel" style="left:1495px;top:70px;width:202px;height:23px"></div>
<div class="tabline" style="left:1696px;top:92px;width:219px"></div>
<svg class="ic" style="left:1376px;top:73px" width="16" height="16" viewBox="0 0 16 16"><path d="M2.8 8.8L0.4 12.4V14.7H7.2L9.8 12.2Z" fill="#fff6b8" stroke="#e8a422" stroke-width=".8" stroke-linejoin="round"/><path d="M1.6 12.6L3.6 10.2L6.4 13.2L5.4 14.2H1.6Z" fill="#fffef0"/><path d="M2.8 8.8L5.4 6L7.2 5.4L11.8 9.2L10.8 11.4L9.8 12.2Z" fill="#b6aeb8" stroke="#9c6c34" stroke-width=".8" stroke-linejoin="round"/><path d="M7.2 5.4L11.4 1L15.6 1.2L15.8 4.8L11.8 9.2Z" fill="#fbd868" stroke="#e8961e" stroke-width="1" stroke-linejoin="round"/><path d="M9 5.6L12.2 2.2" stroke="#fdf0b0" stroke-width="1.4"/><circle cx="11.3" cy="3.3" r=".6" fill="#2448c0"/><circle cx="10.4" cy="4.3" r=".6" fill="#2448c0"/></svg>
<span class="t" style="left:1396px;top:74px;letter-spacing:-0.22px;">Search Repository</span>
<svg class="ic" style="left:1498px;top:73px" width="16" height="16" viewBox="0 0 16 16"><path d="M3.5 1.5H10.5L13.5 4.5V14.5H3.5Z" fill="#f2f3fc" stroke="#a8882a"/><path d="M10.5 1.5V4.5H13.5Z" fill="#e8c890" stroke="#a8882a" stroke-width=".6"/><path d="M3 7.5H7.5V5.2L11.2 8.5L7.5 11.8V9.5H3" fill="#fff" stroke="#6878b0" stroke-width=".9" stroke-linejoin="round"/></svg>
<span class="t" style="left:1518px;top:74px;letter-spacing:-0.33px;">Cross Reference View (1, 0, 0)</span>
<svg class="ic" style="left:1679px;top:76px" width="10" height="10" viewBox="0 0 10 10"><path d="M0.5 0.5L2.5 0.5L4.5 2.5L5.5 2.5L7.5 0.5L9.5 0.5L9.5 2.5L7.5 4.5L7.5 5.5L9.5 7.5L9.5 9.5L7.5 9.5L5.5 7.5L4.5 7.5L2.5 9.5L0.5 9.5L0.5 7.5L2.5 5.5L2.5 4.5L0.5 2.5Z" fill="#fff" stroke="#4a4a4a" stroke-width="1"/></svg>
<svg class="ic" style="left:1881px;top:74px" width="10" height="4" viewBox="0 0 10 4"><path d="M0.5 0.5H9.5V3.5H0.5Z" fill="#fff" stroke="#5a5a5a"/></svg>
<svg class="ic" style="left:1899px;top:74px" width="10" height="10" viewBox="0 0 10 10"><path d="M0.5 0.5H9.5V9.5H0.5Z" fill="#fff" stroke="#5a5a5a"/><path d="M1 2.5H9" stroke="#5a5a5a"/></svg>
<div class="b" style="left:1433px;top:97px;width:46px;height:21px;background:linear-gradient(#f6f6f6,#e9e9e9);border:1px solid #b4b4b4;border-bottom:0"></div>
<div class="b" style="left:1480px;top:97px;width:61px;height:21px;background:linear-gradient(#f6f6f6,#e9e9e9);border:1px solid #b4b4b4;border-bottom:0"></div>
<div class="b" style="left:1376px;top:118px;width:535px;height:416px;border:1px solid #b4b4b4;background:#fff"></div>
<div class="b" style="left:1376px;top:96px;width:57px;height:23px;background:#fff;border:1px solid #b4b4b4;border-bottom:0"></div>
<span class="t" style="left:1383px;top:98px;letter-spacing:-0.48px;">Used By</span>
<span class="t" style="left:1437px;top:100px;letter-spacing:-0.59px;">Uses</span>
<span class="t" style="left:1485px;top:100px;letter-spacing:0.07px;">Clipboard</span>
<div class="b" style="left:1380px;top:143px;width:119px;height:388px;background:#f7f7f7"></div>
<div class="vl" style="left:1499px;top:120px;height:411px;background:#e6eaf2"></div>
<div class="vl" style="left:1699px;top:120px;height:411px;background:#e6eaf2"></div>
<div class="vl" style="left:1798px;top:120px;height:411px;background:#e6eaf2"></div>
<div class="hl" style="left:1380px;top:142px;width:529px;background:#ebeff5"></div>
<div class="hl" style="left:1380px;top:161px;width:529px;background:#ebeff5"></div>
<div class="hl" style="left:1380px;top:180px;width:529px;background:#ebeff5"></div>
<div class="hl" style="left:1380px;top:199px;width:529px;background:#ebeff5"></div>
<div class="hl" style="left:1380px;top:218px;width:529px;background:#ebeff5"></div>
<div class="hl" style="left:1380px;top:237px;width:529px;background:#ebeff5"></div>
<div class="hl" style="left:1380px;top:256px;width:529px;background:#ebeff5"></div>
<div class="hl" style="left:1380px;top:275px;width:529px;background:#ebeff5"></div>
<div class="hl" style="left:1380px;top:294px;width:529px;background:#ebeff5"></div>
<div class="hl" style="left:1380px;top:313px;width:529px;background:#ebeff5"></div>
<div class="hl" style="left:1380px;top:332px;width:529px;background:#ebeff5"></div>
<div class="hl" style="left:1380px;top:351px;width:529px;background:#ebeff5"></div>
<div class="hl" style="left:1380px;top:370px;width:529px;background:#ebeff5"></div>
<div class="hl" style="left:1380px;top:389px;width:529px;background:#ebeff5"></div>
<div class="hl" style="left:1380px;top:408px;width:529px;background:#ebeff5"></div>
<div class="hl" style="left:1380px;top:427px;width:529px;background:#ebeff5"></div>
<div class="hl" style="left:1380px;top:446px;width:529px;background:#ebeff5"></div>
<div class="hl" style="left:1380px;top:465px;width:529px;background:#ebeff5"></div>
<div class="hl" style="left:1380px;top:484px;width:529px;background:#ebeff5"></div>
<div class="hl" style="left:1380px;top:503px;width:529px;background:#ebeff5"></div>
<div class="hl" style="left:1380px;top:522px;width:529px;background:#ebeff5"></div>
<svg class="ic" style="left:1434px;top:120px" width="8" height="4" viewBox="0 0 8 4"><path d="M0 0H8L4 4Z" fill="#7fb0e0"/></svg>
<span class="t" style="left:1385px;top:123px;letter-spacing:-0.25px;">Type</span>
<span class="t" style="left:1505px;top:123px;letter-spacing:0.00px;">From</span>
<span class="t" style="left:1705px;top:123px;letter-spacing:-0.42px;">Role</span>
<span class="t" style="left:1385px;top:145px;letter-spacing:0.18px;">CompoundDialogue</span>
<span class="t" style="left:1505px;top:145px;letter-spacing:-0.11px;">InventarisatiePagina2</span>
<span class="t" style="left:1705px;top:145px;letter-spacing:-0.00px;">dialogueCalls</span>
<div class="panel" style="left:1372px;top:541px;width:544px;height:468px"></div>
<div class="b" style="left:1373px;top:567px;width:542px;height:441px;background:#fff"></div>
<div class="tabsel" style="left:1373px;top:542px;width:102px;height:23px"></div>
<div class="tabline" style="left:1474px;top:564px;width:441px"></div>
<svg class="ic" style="left:1378px;top:547px" width="13" height="13" viewBox="0 0 13 13"><path d="M0.5 0.5H12.5V10.5H0.5Z" fill="#fff" stroke="#5a6a9a"/><path d="M1 1.5H12" stroke="#8aa0c8" stroke-width="1.6"/><path d="M1 4.5H12M1 6.5H12M1 8.5H12M4.5 3V10" stroke="#8898c0" fill="none" stroke-width=".9"/></svg>
<span class="t" style="left:1396px;top:546px;letter-spacing:-0.07px;">Properties</span>
<svg class="ic" style="left:1457px;top:548px" width="10" height="10" viewBox="0 0 10 10"><path d="M0.5 0.5L2.5 0.5L4.5 2.5L5.5 2.5L7.5 0.5L9.5 0.5L9.5 2.5L7.5 4.5L7.5 5.5L9.5 7.5L9.5 9.5L7.5 9.5L5.5 7.5L4.5 7.5L2.5 9.5L0.5 9.5L0.5 7.5L2.5 5.5L2.5 4.5L0.5 2.5Z" fill="#fff" stroke="#4a4a4a" stroke-width="1"/></svg>
<svg class="ic" style="left:1747px;top:546px" width="16" height="16" viewBox="0 0 16 16"><path d="M0.5 4.5H11.5V13.5H0.5Z" fill="#fafcff" stroke="#a09068"/><path d="M1 5.5H11" stroke="#5f8de0" stroke-width="2"/><path d="M6 9L9 6" stroke="#3a3a3a"/><path d="M8.5 4.5L11.5 1L14.5 3.5L11 7Z" fill="#3cb84a" stroke="#1f7a2a" stroke-width=".8"/></svg>
<div class="b" style="left:1766px;top:542px;width:23px;height:22px;background:#c2dbf8;border:1px solid #6aa0e0"></div>
<svg class="ic" style="left:1773px;top:547px" width="10" height="14" viewBox="0 0 10 14"><path d="M1.5 2.5V11.5H6M1.5 7H6M3 2.5H8" fill="none" stroke="#4a6aa8"/><path d="M0.5 0.5H3.5V3.5H0.5ZM6.5 5.5H9.5V8.5H6.5ZM6.5 10H9.5V13H6.5Z" fill="#dfe8f8" stroke="#4a6aa8"/></svg>
<svg class="ic" style="left:1793px;top:545px" width="15" height="16" viewBox="0 0 15 16"><path d="M0.5 2.5H5.5M3.5 0.5L5.5 2.5L3.5 4.5M7.5 0V5M0.5 12.5H5.5M3.5 10.5L5.5 12.5L3.5 14.5M7.5 10V15" fill="none" stroke="#3a4a7a"/><path d="M3.5 6.5H9.5V4.5L13.5 7.5L9.5 10.5V8.5H3.5Z" fill="#fde27a" stroke="#c8861a" stroke-linejoin="round"/></svg>
<svg class="ic" style="left:1816px;top:547px" width="15" height="15" viewBox="0 0 15 15"><path d="M0.5 0.5H12.5V10.5H0.5Z" fill="#efefef" stroke="#cfcfcf"/><path d="M1 1.5H12" stroke="#d0d0d0" stroke-width="2"/><path d="M1 4.5H12M1 7.5H12M4.5 3V10M8.5 3V10" stroke="#d6d6d6" fill="none"/><path d="M7 8L13.5 10L11 11L13 13.5L11.5 14.5L9.8 12L8 14Z" fill="#e2e2e2" stroke="#c6c6c6"/></svg>
<svg class="ic" style="left:1839px;top:546px" width="16" height="16" viewBox="0 0 16 16"><path d="M1.5 1V14M1.5 5.5H5M1.5 9.5H5M1.5 13.5H5" fill="none" stroke="#cfcfcf" stroke-dasharray="1 1"/><circle cx="1.5" cy="1.5" r="1.2" fill="#f4f4f4" stroke="#c6c6c6"/><path d="M5.5 4H8V7H5.5ZM5.5 8H8V11H5.5ZM5.5 12H8V15H5.5Z" fill="#ececec" stroke="#cdcdcd"/><path d="M15.5 8H11.5V5.5L7.5 9.5L11.5 13.5V11H15.5Z" fill="#e6e6de" stroke="#cfcfc8" stroke-linejoin="round"/></svg>
<svg class="ic" style="left:1862px;top:546px" width="10" height="6" viewBox="0 0 10 6"><path d="M0.5 0.5H9.5L5 5Z" fill="#fff" stroke="#5a5a5a" stroke-width=".9"/></svg>
<svg class="ic" style="left:1881px;top:546px" width="10" height="4" viewBox="0 0 10 4"><path d="M0.5 0.5H9.5V3.5H0.5Z" fill="#fff" stroke="#5a5a5a"/></svg>
<svg class="ic" style="left:1899px;top:546px" width="10" height="10" viewBox="0 0 10 10"><path d="M0.5 0.5H9.5V9.5H0.5Z" fill="#fff" stroke="#5a5a5a"/><path d="M1 2.5H9" stroke="#5a5a5a"/></svg>
<span class="t" style="left:1381px;top:571px;letter-spacing:-0.04px;">Property</span>
<span class="t" style="left:1596px;top:571px;letter-spacing:-0.16px;">Value</span>
<div class="hl" style="left:1374px;top:590px;width:540px;background:#e4e8ef"></div>
<div class="hl" style="left:1374px;top:608px;width:540px;background:#e0e0e0"></div>
<div class="hl" style="left:1374px;top:626px;width:540px;background:#e0e0e0"></div>
<div class="hl" style="left:1374px;top:644px;width:540px;background:#e0e0e0"></div>
<div class="hl" style="left:1374px;top:662px;width:540px;background:#e0e0e0"></div>
<div class="hl" style="left:1374px;top:680px;width:540px;background:#e0e0e0"></div>
<div class="hl" style="left:1374px;top:698px;width:540px;background:#e0e0e0"></div>
<div class="hl" style="left:1374px;top:716px;width:540px;background:#e0e0e0"></div>
<div class="hl" style="left:1374px;top:734px;width:540px;background:#e0e0e0"></div>
<div class="hl" style="left:1374px;top:752px;width:540px;background:#e0e0e0"></div>
<div class="hl" style="left:1374px;top:770px;width:540px;background:#e0e0e0"></div>
<div class="hl" style="left:1374px;top:788px;width:540px;background:#e0e0e0"></div>
<div class="hl" style="left:1374px;top:806px;width:540px;background:#e0e0e0"></div>
<div class="hl" style="left:1374px;top:824px;width:540px;background:#e0e0e0"></div>
<div class="hl" style="left:1374px;top:842px;width:540px;background:#e0e0e0"></div>
<div class="hl" style="left:1374px;top:860px;width:540px;background:#e0e0e0"></div>
<div class="hl" style="left:1374px;top:878px;width:540px;background:#e0e0e0"></div>
<div class="hl" style="left:1374px;top:896px;width:540px;background:#e0e0e0"></div>
<div class="hl" style="left:1374px;top:914px;width:540px;background:#e0e0e0"></div>
<div class="hl" style="left:1374px;top:932px;width:540px;background:#e0e0e0"></div>
<div class="hl" style="left:1374px;top:950px;width:540px;background:#e0e0e0"></div>
<div class="hl" style="left:1374px;top:968px;width:540px;background:#e0e0e0"></div>
<div class="hl" style="left:1374px;top:986px;width:540px;background:#e0e0e0"></div>
<div class="hl" style="left:1374px;top:1004px;width:540px;background:#e0e0e0"></div>
<div class="vl" style="left:1589px;top:566px;height:442px;background:#e0e0e0"></div>
<div class="vl" style="left:1908px;top:566px;height:442px;background:#e0e0e0"></div>
<span class="t" style="left:1399px;top:592px;letter-spacing:0.13px;">Conditions</span>
<span class="t" style="left:1418px;top:610px;letter-spacing:0.06px;">Entry Condition</span>
<span class="t" style="left:1418px;top:628px;letter-spacing:0.07px;">Exit Condition</span>
<span class="t" style="left:1418px;top:646px;letter-spacing:-0.11px;">Filter</span>
<span class="t" style="left:1399px;top:664px;letter-spacing:0.09px;">Context</span>
<span class="t" style="left:1418px;top:682px;letter-spacing:-0.11px;">Context Classifier</span>
<svg class="ic" style="left:1593px;top:683px" width="13" height="13" viewBox="0 0 13 13"><path d="M6.5 0.5L8 5L12.5 6.5L8 8L6.5 12.5L5 8L0.5 6.5L5 5Z" fill="#4aa070" stroke="#2a7a4a" stroke-width=".8" stroke-linejoin="round"/><path d="M6.5 3.5L7.3 5.7L9.5 6.5L7.3 7.3L6.5 9.5L5.7 7.3L3.5 6.5L5.7 5.7Z" fill="#8fd0a8"/></svg>
<span class="t" style="left:1611px;top:682px;letter-spacing:-0.01px;">contextValueModel (BedrijfsActInv) IC Value Model</span>
<span class="t" style="left:1399px;top:700px;letter-spacing:-0.38px;">General</span>
<span class="t" style="left:1418px;top:718px;letter-spacing:-0.00px;">Description</span>
<svg class="ic" style="left:1593px;top:720px" width="14" height="12" viewBox="0 0 14 12"><path d="M0.5 0.5H13.5V9.5" fill="none" stroke="#c9c0a8"/><path d="M0.5 0.5V6.5H5.5" fill="none" stroke="#8aa4d0"/><path d="M2.5 2V5" stroke="#1a4a9a" stroke-width="1.6"/><path d="M5 2.5H13M7 4.5H13M6 6.5H13M7 8.5H13M6 10.5H13" stroke="#3a5f9a"/></svg>
<span class="t" style="left:1418px;top:736px;letter-spacing:-0.00px;">Name</span>
<svg class="ic" style="left:1593px;top:738px" width="14" height="12" viewBox="0 0 14 12"><path d="M0.5 0.5H13.5V9.5" fill="none" stroke="#c9c0a8"/><path d="M0.5 0.5V6.5H5.5" fill="none" stroke="#8aa4d0"/><path d="M2.5 2V5" stroke="#1a4a9a" stroke-width="1.6"/><path d="M5 2.5H13M7 4.5H13M6 6.5H13M7 8.5H13M6 10.5H13" stroke="#3a5f9a"/></svg>
<span class="t" style="left:1611px;top:736px;letter-spacing:-0.02px;">BedrijfsActInv</span>
<span class="t" style="left:1399px;top:754px;letter-spacing:0.08px;">Misc</span>
<span class="t" style="left:1418px;top:772px;letter-spacing:-0.09px;">Category</span>
<span class="t" style="left:1418px;top:790px;letter-spacing:-0.00px;">Container Propagation</span>
<svg class="ic" style="left:1593px;top:792px" width="14" height="12" viewBox="0 0 14 12"><path d="M0.5 0.5H13.5V9.5" fill="none" stroke="#c9c0a8"/><path d="M0.5 0.5V6.5H5.5" fill="none" stroke="#8aa4d0"/><path d="M2.5 2V5" stroke="#1a4a9a" stroke-width="1.6"/><path d="M5 2.5H13M7 4.5H13M6 6.5H13M7 8.5H13M6 10.5H13" stroke="#3a5f9a"/></svg>
<span class="t" style="left:1611px;top:790px;letter-spacing:-0.00px;">Default</span>
<span class="t" style="left:1418px;top:808px;letter-spacing:-0.28px;">Dynamic Reuse</span>
<svg class="ic" style="left:1593px;top:810px" width="14" height="12" viewBox="0 0 14 12"><path d="M0.5 0.5H13.5V9.5" fill="none" stroke="#c9c0a8"/><path d="M0.5 0.5V6.5H4.5" fill="none" stroke="#8aa4d0"/><path d="M2.5 2V5" stroke="#1a4a9a" stroke-width="1.6"/><path d="M4.5 7L6.5 9.5L10 3.5" fill="none" stroke="#3a5f9a" stroke-width="1.3"/><path d="M8.5 6L12.5 11.5M12.5 6L8.5 11.5" fill="none" stroke="#3a5f9a" stroke-width="1.3"/></svg>
<span class="t" style="left:1611px;top:808px;letter-spacing:0.08px;">true</span>
<span class="t" style="left:1418px;top:826px;letter-spacing:-0.11px;">Layout Container Style</span>
<svg class="ic" style="left:1593px;top:828px" width="14" height="12" viewBox="0 0 14 12"><path d="M0.5 0.5H13.5V9.5" fill="none" stroke="#c9c0a8"/><path d="M0.5 0.5V6.5H5.5" fill="none" stroke="#8aa4d0"/><path d="M2.5 2V5" stroke="#1a4a9a" stroke-width="1.6"/><path d="M5 2.5H13M7 4.5H13M6 6.5H13M7 8.5H13M6 10.5H13" stroke="#3a5f9a"/></svg>
<span class="t" style="left:1611px;top:826px;letter-spacing:-0.00px;">Default</span>
<span class="t" style="left:1418px;top:844px;letter-spacing:-0.04px;">Navigation Style</span>
<svg class="ic" style="left:1593px;top:846px" width="14" height="12" viewBox="0 0 14 12"><path d="M0.5 0.5H13.5V9.5" fill="none" stroke="#c9c0a8"/><path d="M0.5 0.5V6.5H5.5" fill="none" stroke="#8aa4d0"/><path d="M2.5 2V5" stroke="#1a4a9a" stroke-width="1.6"/><path d="M5 2.5H13M7 4.5H13M6 6.5H13M7 8.5H13M6 10.5H13" stroke="#3a5f9a"/></svg>
<span class="t" style="left:1611px;top:844px;letter-spacing:-0.00px;">Default</span>
<span class="t" style="left:1418px;top:862px;letter-spacing:-0.22px;">Parent</span>
<span class="t" style="left:1418px;top:880px;letter-spacing:-0.10px;">Pattern</span>
<svg class="ic" style="left:1593px;top:882px" width="14" height="12" viewBox="0 0 14 12"><path d="M0.5 0.5H13.5V9.5" fill="none" stroke="#c9c0a8"/><path d="M0.5 0.5V6.5H5.5" fill="none" stroke="#8aa4d0"/><path d="M2.5 2V5" stroke="#1a4a9a" stroke-width="1.6"/><path d="M5 2.5H13M7 4.5H13M6 6.5H13M7 8.5H13M6 10.5H13" stroke="#3a5f9a"/></svg>
<span class="t" style="left:1611px;top:880px;letter-spacing:-0.00px;">Default</span>
<span class="t" style="left:5px;top:1017px;letter-spacing:-0.07px;">Selected Object: BedrijfsActInv (Bedrijfsactiviteiten)</span>

</body></html>
